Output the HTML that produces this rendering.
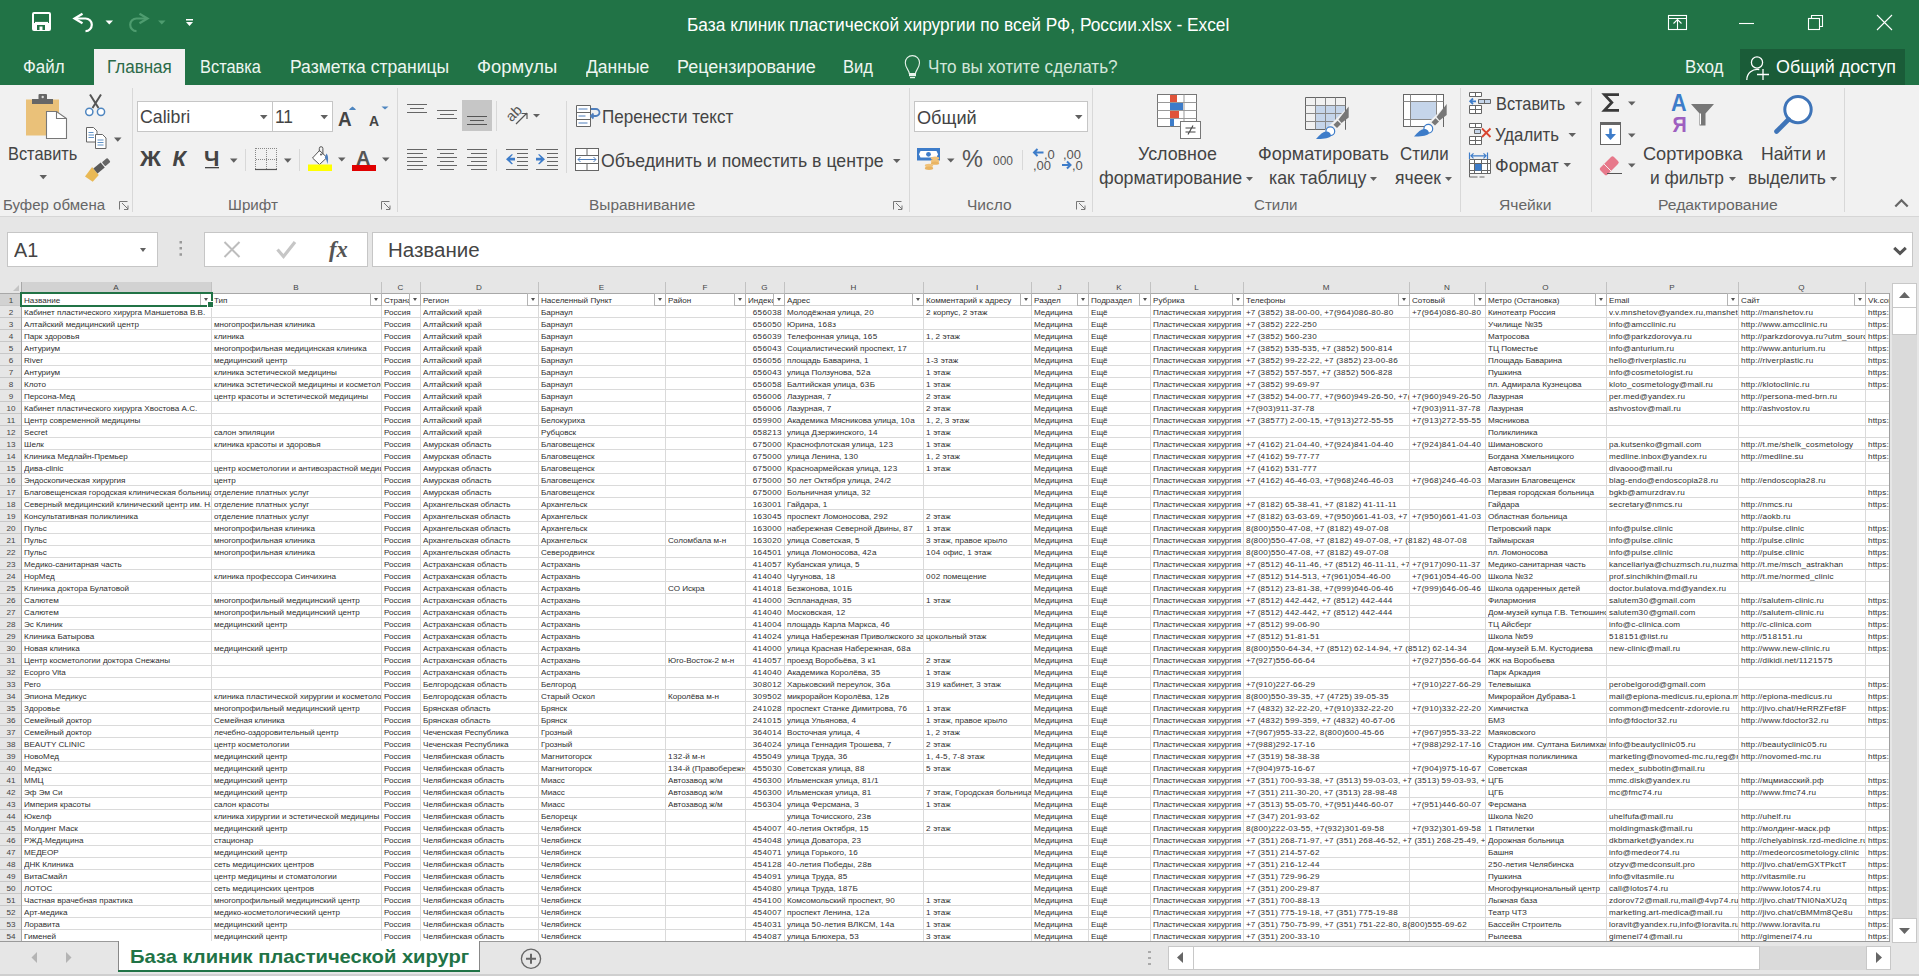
<!DOCTYPE html>
<html><head><meta charset="utf-8"><title>Excel</title><style>
*{box-sizing:border-box}
html,body{margin:0;padding:0}
body{width:1919px;height:976px;overflow:hidden;position:relative;font-family:"Liberation Sans",sans-serif;background:#fff;color:#262626}
.a{position:absolute}
.t{position:absolute;white-space:nowrap;line-height:1;transform-origin:0 0}
.c{position:absolute;white-space:nowrap;overflow:hidden;font-size:8.1px;line-height:12px;height:12px;color:#2e2e2e}
.c b{font-weight:400;letter-spacing:.38px}
.l{letter-spacing:.18px}
.l b{letter-spacing:.5px}
.fb{position:absolute;width:12px;height:13px;background:#fff;border:1px solid #b4b4b4}
.sb{position:absolute;background:#fff;border:1px solid #c8c8c8}
.vl{position:absolute;width:1px;background:#dadada}
.hl{position:absolute;height:1px;background:#dadada}
.dd{position:absolute;width:0;height:0;border-left:3.5px solid transparent;border-right:3.5px solid transparent;border-top:4px solid #606060}
.tab{position:absolute;top:49px;height:36px;line-height:36px;font-size:17px;color:#f0f6f2;white-space:nowrap}
.lbl{position:absolute;top:196px;font-size:15px;color:#595959;white-space:nowrap;line-height:18px}
.rb{position:absolute;font-size:17px;color:#333;white-space:nowrap;line-height:20px}
</style></head><body>

<div class="a" style="left:0;top:0;width:1919px;height:85px;background:#217346"></div>
<div class="a" style="left:94px;top:49px;width:91px;height:37px;background:#f1f1f1"></div>
<div class="a" style="left:1740px;top:49px;width:165px;height:36px;background:#1a5c38"></div>
<div class="a" style="left:0;top:85px;width:1919px;height:132px;background:#f1f1f1;border-bottom:1px solid #d6d6d6"></div>
<div class="a" style="left:132px;top:88px;width:1px;height:124px;background:#d8d8d8"></div>
<div class="a" style="left:397px;top:88px;width:1px;height:124px;background:#d8d8d8"></div>
<div class="a" style="left:496px;top:101px;width:1px;height:30px;background:#d8d8d8"></div>
<div class="a" style="left:496px;top:149px;width:1px;height:22px;background:#d8d8d8"></div>
<div class="a" style="left:566px;top:101px;width:1px;height:72px;background:#d8d8d8"></div>
<div class="a" style="left:909px;top:88px;width:1px;height:124px;background:#d8d8d8"></div>
<div class="a" style="left:1092px;top:88px;width:1px;height:124px;background:#d8d8d8"></div>
<div class="a" style="left:1460px;top:88px;width:1px;height:124px;background:#d8d8d8"></div>
<div class="a" style="left:1591px;top:88px;width:1px;height:124px;background:#d8d8d8"></div>
<div class="a" style="left:1844px;top:88px;width:1px;height:124px;background:#d8d8d8"></div>
<div class="a" style="left:0;top:217px;width:1919px;height:65px;background:#e6e6e6"></div>
<div class="a" style="left:7px;top:232px;width:151px;height:35px;background:#fff;border:1px solid #c6c6c6"></div>
<div class="dd" style="left:140px;top:248px"></div>
<div class="a" style="left:204px;top:232px;width:164px;height:35px;background:#fff;border:1px solid #c6c6c6"></div>
<div class="a" style="left:372px;top:232px;width:1541px;height:35px;background:#fff;border:1px solid #c6c6c6"></div>
<svg class="a" style="left:0;top:0" width="1919" height="282"><rect x="33" y="13" width="17" height="17" rx="1" fill="none" stroke="#fff" stroke-width="2"/><rect x="33" y="23" width="17" height="7" fill="#fff"/><path d="M37 25h8v5h-2.5v-3.5h-3v3.5H37z" fill="#217346"/><path d="M35 22.5h13" stroke="#fff" stroke-width="1.2"/><path d="M82.5 13.8L74.5 18.5l8 4.8" fill="none" stroke="#fff" stroke-width="2.2" stroke-linejoin="miter"/><path d="M75 18.5h10.5a6.3 6.3 0 0 1 0 12.6" fill="none" stroke="#fff" stroke-width="2.2"/><path d="M105.5 20.5h7.5l-3.75 4z" fill="#fff"/><path d="M139.5 13.8l8 4.7l-8 4.8" fill="none" stroke="#4e9c6f" stroke-width="2.2"/><path d="M147 18.5h-10.5a6.3 6.3 0 0 0 0 12.6" fill="none" stroke="#4e9c6f" stroke-width="2.2"/><path d="M158 20.5h7.5l-3.75 4z" fill="#4e9c6f"/><rect x="186" y="19" width="7" height="1.5" fill="#fff"/><path d="M186 22h7l-3.5 4z" fill="#fff"/><rect x="1668.5" y="15.5" width="18" height="14" fill="none" stroke="#fff" stroke-width="1.1"/><path d="M1668.5 18.5h18M1677.5 20v9.5M1673.5 23.5l4-4l4 4" fill="none" stroke="#fff" stroke-width="1.1"/><path d="M1739 23.5h15" stroke="#fff" stroke-width="1.1"/><rect x="1808.5" y="18.5" width="11" height="11" fill="none" stroke="#fff" stroke-width="1.1"/><path d="M1811.5 18.5v-3h11v11h-3" fill="none" stroke="#fff" stroke-width="1.1"/><path d="M1877 15l15 15M1892 15l-15 15" stroke="#fff" stroke-width="1.1"/><path d="M909.3 73.5c0-3-4-5.5-4-10.8a7.1 7.1 0 0 1 14.2 0c0 5.3-4 7.8-4 10.8z" fill="none" stroke="#e8f3ec" stroke-width="1.1"/><rect x="909" y="73" width="7" height="3.2" fill="#e8f3ec"/><rect x="910" y="77" width="5" height="1.2" fill="#e8f3ec"/><circle cx="1757" cy="62.5" r="5.6" fill="none" stroke="#fff" stroke-width="1.3"/><path d="M1746.8 80a10.5 10.5 0 0 1 12.5 -10.5" fill="none" stroke="#fff" stroke-width="1.3"/><path d="M1757 74.5h12M1763 69v11" stroke="#fff" stroke-width="1.3"/><rect x="26" y="99.5" width="33" height="36" fill="#eac179"/><rect x="32" y="99" width="21" height="5" fill="#666"/><rect x="38.5" y="94" width="8.5" height="6" rx="1" fill="#666"/><circle cx="42.7" cy="97" r="1.2" fill="#ddd"/><path d="M46.5 111.5h10l10 7v20h-20z" fill="#fff" stroke="#777" stroke-width="1.1"/><path d="M56.5 111.5v7h10" fill="none" stroke="#777" stroke-width="1.1"/><path d="M39.5 175h7.5l-3.75 4.2z" fill="#606060"/><path d="M90 94.5l8.5 13.5M101 94.5l-8.5 13.5" stroke="#555" stroke-width="2"/><circle cx="89.3" cy="111.8" r="3.6" fill="#fff" stroke="#4f86c0" stroke-width="1.5"/><circle cx="101" cy="111.8" r="3.6" fill="#fff" stroke="#4f86c0" stroke-width="1.5"/><path d="M86.5 127.5h7l3.5 3.5v11h-10.5z" fill="#fff" stroke="#666" stroke-width="1"/><path d="M88.5 132.5h5M88.5 135h5.5M88.5 137.5h5.5" stroke="#4f86c0" stroke-width="0.9"/><path d="M95.5 134.5h7l3.5 3.5v10.5h-10.5z" fill="#fff" stroke="#666" stroke-width="1"/><path d="M97.5 140h6M97.5 142.5h6M97.5 145h6" stroke="#4f86c0" stroke-width="0.9"/><path d="M114 137.5h7.5l-3.75 4.2z" fill="#606060"/><g transform="translate(98.5 168.5) rotate(-40)"><path d="M-4 -5.2L-4 5.2L-13 6.5L-15.5 -2.5z" fill="#e9b955"/><rect x="-4" y="-3.2" width="9.5" height="6.4" fill="#5a5a5a"/><rect x="6.5" y="-2.6" width="7" height="5.2" rx="1" fill="#666"/></g><rect x="137.5" y="101.5" width="195" height="30" fill="#fff" stroke="#c6c6c6"/><path d="M272.5 102v29" stroke="#c6c6c6"/><path d="M260 115h7.5l-3.75 4.2z" fill="#606060"/><path d="M320.5 115h7.5l-3.75 4.2z" fill="#606060"/><path d="M352.5 110l3.5-3h-7z" fill="#4f86c0" transform="rotate(180 352.5 108.5)"/><path d="M349 109.5l3.5-3l3.5 3z" fill="#4f86c0"/><path d="M381.5 106.5h7l-3.5 3z" fill="#4f86c0"/><rect x="205" y="167" width="14" height="1.3" fill="#444"/><path d="M230 158.5h7.5l-3.75 4.2z" fill="#606060"/><path d="M245.5 149v22M299.5 149v22" stroke="#d8d8d8"/><path d="M255.5 148.5h21M255.5 159.5h21M255.5 148v21M266.5 148v21M276.5 148v21" fill="none" stroke="#888" stroke-width="1" stroke-dasharray="1 1" shape-rendering="crispEdges"/><path d="M255 169.5h22" stroke="#555" stroke-width="1.2"/><path d="M284 158.5h7.5l-3.75 4.2z" fill="#606060"/><path d="M312.5 158l7-7.5l7.5 7l-7.5 7z" fill="#fff" stroke="#555" stroke-width="1"/><path d="M319.3 151.5v-3a1.8 1.8 0 0 1 3.6 0v6" fill="none" stroke="#555" stroke-width="1"/><circle cx="321" cy="154.5" r="1" fill="#555"/><path d="M326.5 153.5c2 2 2 7 0.8 10.5c-0.5-3-1-5-2.5-6.5z" fill="#4f7fbd"/><rect x="308" y="164.5" width="24" height="6.5" fill="#ffff00"/><path d="M338 157.5h7.5l-3.75 4z" fill="#606060"/><rect x="352" y="165" width="24" height="6" fill="#e00000"/><path d="M382 157.5h7.5l-3.75 4z" fill="#606060"/><path d="M119.5 209.5v-8h8" fill="none" stroke="#777" stroke-width="1"/><path d="M122 203l6 6M128 205.5v4h-4" fill="none" stroke="#777" stroke-width="1"/><path d="M381.5 209.5v-8h8" fill="none" stroke="#777" stroke-width="1"/><path d="M384 203l6 6M390 205.5v4h-4" fill="none" stroke="#777" stroke-width="1"/><path d="M893.5 209.5v-8h8" fill="none" stroke="#777" stroke-width="1"/><path d="M896 203l6 6M902 205.5v4h-4" fill="none" stroke="#777" stroke-width="1"/><path d="M1076.5 209.5v-8h8" fill="none" stroke="#777" stroke-width="1"/><path d="M1079 203l6 6M1085 205.5v4h-4" fill="none" stroke="#777" stroke-width="1"/><path d="M407.0 104.5h20 M410.0 108.5h14 M407.0 112.5h20" stroke="#666" stroke-width="1"/><path d="M437.0 110.5h20 M440.0 114.5h14 M437.0 118.5h20" stroke="#666" stroke-width="1"/><rect x="462" y="100" width="30" height="31" fill="#c6c6c6"/><path d="M467.0 116.5h20 M470.0 120.5h14 M467.0 124.5h20" stroke="#555" stroke-width="1"/><path d="M407 149.5h20 M407 153.5h16 M407 157.5h20 M407 161.5h16 M407 165.5h20 M407 169.5h16" stroke="#666" stroke-width="1"/><path d="M437.0 149.5h20 M440.0 153.5h14 M437.0 157.5h20 M440.0 161.5h14 M437.0 165.5h20 M440.0 169.5h14" stroke="#666" stroke-width="1"/><path d="M467 149.5h20 M471 153.5h16 M467 157.5h20 M471 161.5h16 M467 165.5h20 M471 169.5h16" stroke="#666" stroke-width="1"/><text x="0" y="0" font-family="Liberation Sans" font-size="14.5" fill="#555" transform="translate(511.5 122.5) rotate(-45)">ab</text><path d="M516 124l11-11M521.5 113.5h5.5v5.5" fill="none" stroke="#555" stroke-width="1.2"/><path d="M533 114h7l-3.5 3.5z" fill="#606060"/><path d="M506 149.5h22M517 153.5h11M517 157.5h11M517 161.5h11M517 165.5h11M506 169.5h22" stroke="#666" stroke-width="1"/><path d="M515 157.8h-5l3-3.3l-1.5-0.3l-5.5 5l5.5 5l1.5-0.3l-3-3.3h5z" fill="#3d7cc9"/><path d="M536 149.5h22M547 153.5h11M547 157.5h11M547 161.5h11M547 165.5h11M536 169.5h22" stroke="#666" stroke-width="1"/><path d="M536 157.8h5l-3-3.3l1.5-0.3l5.5 5l-5.5 5l-1.5-0.3l3-3.3h-5z" fill="#3d7cc9"/><path d="M576.5 105.5h14v21h-14z" fill="#fff" stroke="#666"/><path d="M576.5 112.5h14M576.5 119.5h14" stroke="#666"/><path d="M578.5 109h9M578.5 116h7M578.5 123h9" stroke="#4f7fbd"/><path d="M591 109h5a3.5 3.5 0 0 1 0 7h-5M593.5 113.5l-2.5 2.5l2.5 2.5" fill="none" stroke="#4f7fbd" stroke-width="1.8"/><rect x="575.5" y="148.5" width="23" height="22" fill="#fff" stroke="#666"/><path d="M575.5 155.5h23M575.5 163.5h23M587 148.5v7M587 163.5v7" stroke="#666"/><path d="M578 159.5h18M580.5 157l-2.5 2.5l2.5 2.5M593.5 157l2.5 2.5l-2.5 2.5" fill="none" stroke="#4f7fbd" stroke-width="1"/><path d="M893 159h7.5l-3.75 4z" fill="#606060"/><rect x="914.5" y="101.5" width="173" height="30" fill="#fff" stroke="#c6c6c6"/><path d="M1075 115h7.5l-3.75 4.2z" fill="#606060"/><rect x="917" y="148" width="23" height="12.5" fill="#3d7cc9"/><path d="M920.5 151h16l1.5 3.2l-1.5 3.2h-16l-1.5-3.2z" fill="#fff"/><circle cx="928.5" cy="154.3" r="2.4" fill="#3d7cc9"/><ellipse cx="935" cy="158.3" rx="4.2" ry="1.8" fill="#f0c27a"/><ellipse cx="935" cy="161" rx="4.2" ry="1.8" fill="#f0c27a"/><ellipse cx="935" cy="163.2" rx="4.2" ry="1.6" fill="#e9b462"/><ellipse cx="929" cy="165.5" rx="4.2" ry="1.8" fill="#f0c27a"/><ellipse cx="929" cy="168.3" rx="4.2" ry="1.7" fill="#e9b462"/><path d="M947 158.5h7.5l-3.75 4z" fill="#606060"/><path d="M1022.5 150v20" stroke="#d8d8d8"/><path d="M1033.5 152.5h10M1037.5 149l-3.5 3.5l3.5 3.5" fill="none" stroke="#3d7cc9" stroke-width="2"/><path d="M1062 165h8M1067 161.5l3.5 3.5l-3.5 3.5" fill="none" stroke="#3d7cc9" stroke-width="2"/><rect x="1157.5" y="94.5" width="39" height="32" fill="#fff" stroke="#777"/><path d="M1157.5 102.5h39M1157.5 110.5h39M1157.5 118.5h39M1170.5 94.5v32M1184 94.5v32" stroke="#999"/><rect x="1170" y="95" width="7" height="7" fill="#e0543a"/><rect x="1170" y="103" width="13" height="7" fill="#3d7cc9"/><rect x="1170" y="111" width="9" height="7" fill="#e0543a"/><rect x="1170" y="119" width="4" height="7" fill="#3d7cc9"/><rect x="1180.5" y="121.5" width="20" height="17" fill="#fff" stroke="#777"/><path d="M1185.5 128h10M1185.5 132h10M1193 125.5l-5 9" stroke="#444" stroke-width="1.1"/><rect x="1315.5" y="105.5" width="30" height="24" fill="#c5d5ea"/><path d="M1305.5 97.5h40v32h-40z" fill="none" stroke="#666"/><path d="M1305.5 105.5h40M1305.5 113.5h40M1305.5 121.5h40M1315.5 97.5v32M1325.5 97.5v32M1335.5 97.5v32" stroke="#888"/><path d="M1345 110L1324 131L1345 131z" fill="#f1f1f1"/><g transform="translate(0 0)"><path d="M1338.5 119.5L1348.7 106.5V117.5L1341.5 123z" fill="#777"/><path d="M1333.5 124.8L1337.5 120.8L1341 124L1337 128z" fill="#777"/><circle cx="1330.3" cy="131.3" r="4.4" fill="#fff" stroke="#3d7cc9" stroke-width="1.2"/><path d="M1316 139C1320 134 1324 131 1327 131.5C1330 132 1331.5 134.5 1330.5 136.5C1328 138.5 1322 139 1316 139z" fill="#3d7cc9"/></g><rect x="1403.5" y="94.5" width="40" height="32" fill="#fff" stroke="#666"/><rect x="1410" y="101" width="26.5" height="18.5" fill="#c5d5ea"/><path d="M1403.5 101.5h40M1403.5 119.5h40M1410.5 94.5v32M1436.5 94.5v32" stroke="#888"/><path d="M1443 108L1422 129L1443 129z" fill="#f1f1f1"/><g transform="translate(98 -2.5)"><path d="M1338.5 119.5L1348.7 106.5V117.5L1341.5 123z" fill="#777"/><path d="M1333.5 124.8L1337.5 120.8L1341 124L1337 128z" fill="#777"/><circle cx="1330.3" cy="131.3" r="4.4" fill="#fff" stroke="#3d7cc9" stroke-width="1.2"/><path d="M1316 139C1320 134 1324 131 1327 131.5C1330 132 1331.5 134.5 1330.5 136.5C1328 138.5 1322 139 1316 139z" fill="#3d7cc9"/></g><path d="M1469.5 92.5h12v4h-12zM1475.5 92.5v4M1469.5 105.5h12v8h-12zM1469.5 109.5h12M1475.5 105.5v8" fill="#fff" stroke="#666"/><path d="M1478.5 99.5h12v4h-12zM1484.5 99.5v4" fill="#c5d5ea" stroke="#666"/><path d="M1476 101.3h-5M1473 98.5l-2.8 2.8l2.8 2.8" fill="none" stroke="#3d7cc9" stroke-width="1.8"/><path d="M1574.5 101.8h7.5l-3.75 4z" fill="#606060"/><path d="M1469.5 123.5h12v4h-12zM1475.5 123.5v4M1469.5 136.5h12v8h-12zM1469.5 140.5h12M1475.5 136.5v8" fill="#fff" stroke="#666"/><path d="M1474.5 129.5h6v4h-6z" fill="#c5d5ea" stroke="#666"/><path d="M1482 128.5l8.5 8.5M1490.5 128.5l-8.5 8.5" stroke="#d9442e" stroke-width="1.8"/><path d="M1568.5 133h7.5l-3.75 4z" fill="#606060"/><path d="M1469.5 159.5h21v14h-21zM1469.5 163.5h21M1469.5 170.5h21M1474.5 159.5v14M1481.5 159.5v14M1487.5 159.5v14" fill="#fff" stroke="#666"/><rect x="1475" y="164" width="6.5" height="6.5" fill="#3d7cc9"/><path d="M1469.5 173.5v3.5h8M1479.5 177h5" fill="none" stroke="#666"/><path d="M1471 155.8h15M1473.5 153.3l-2.5 2.5l2.5 2.5M1483.5 153.3l2.5 2.5l-2.5 2.5M1469.5 152.5v6.5M1487.5 152.5v6.5" fill="none" stroke="#3d7cc9" stroke-width="1.2"/><path d="M1563.5 163h7.5l-3.75 4z" fill="#606060"/><path d="M1619 94.6H1604.5L1611.8 102.5L1604.5 110.3H1619" fill="none" stroke="#3a3a3a" stroke-width="2.8" stroke-linejoin="miter"/><path d="M1628 101.5h7.5l-3.75 4z" fill="#606060"/><rect x="1600.5" y="122.5" width="20" height="22" fill="#fff" stroke="#666"/><rect x="1600" y="122" width="21" height="3" fill="#666"/><path d="M1610.5 128.5v7" stroke="#3d7cc9" stroke-width="2.6"/><path d="M1605 134h11l-5.5 6z" fill="#3d7cc9"/><path d="M1628 133.5h7.5l-3.75 4z" fill="#606060"/><path d="M1600.5 167.5l10.5-10.5a2 2 0 0 1 3 0l4 4a2 2 0 0 1 0 3l-10.5 10.5a2 2 0 0 1-3 0l-4-4a2 2 0 0 1 0-3z" fill="#e7798b"/><path d="M1604 164l7 7" stroke="#f1f1f1" stroke-width="1"/><path d="M1607 173.5h15" stroke="#555" stroke-width="1"/><path d="M1628 163.5h7.5l-3.75 4z" fill="#606060"/><text x="1671" y="111.5" font-family="Liberation Sans" font-size="24" font-weight="700" fill="#3d7cc9" transform="translate(167.1 0) scale(.9 1)">A</text><text x="1672.5" y="132.5" font-family="Liberation Sans" font-size="22" font-weight="700" fill="#9e5fc0" transform="translate(167.2 0) scale(.9 1)">Я</text><path d="M1691 104h23l-8.5 9.5v12h-6v-12z" fill="#777"/><path d="M1700.5 113.5v11" stroke="#fff" stroke-width="1"/><circle cx="1798" cy="109.6" r="13.2" fill="#fff" stroke="#3e74b8" stroke-width="3"/><path d="M1788.5 119.5l-12 12" stroke="#3e74b8" stroke-width="4.6" stroke-linecap="round"/><path d="M1895.3 206.5l6.2-6.3l6.2 6.3" fill="none" stroke="#666" stroke-width="2.2"/><path d="M1246 177h7l-3.5 4z" fill="#606060"/><path d="M1370 177h7l-3.5 4z" fill="#606060"/><path d="M1445 177h7l-3.5 4z" fill="#606060"/><path d="M1729 177h7l-3.5 4z" fill="#606060"/><path d="M1830 177h7l-3.5 4z" fill="#606060"/><path d="M179.5 241h2.5v2.5h-2.5zM179.5 247h2.5v2.5h-2.5zM179.5 253.2h2.5v2.5h-2.5z" fill="#999"/><path d="M224.5 242l15 15M239.5 242l-15 15" stroke="#bdbdbd" stroke-width="2"/><path d="M277.5 249.5l6 7l11.5-14.5" fill="none" stroke="#c6c6c6" stroke-width="3.2"/><path d="M1894.2 247.8l5.8 5.6l5.8-5.6" fill="none" stroke="#555" stroke-width="3"/></svg>
<div class="t" style="left:337.5px;top:107.5px;font-size:21px;color:#444;font-weight:700;transform:scaleX(.9)">A</div><div class="t" style="left:368.5px;top:113px;font-size:15.5px;color:#444;font-weight:700;transform:scaleX(.9)">A</div><div class="t" style="left:139.5px;top:148px;font-size:22px;color:#444;font-weight:700;transform:scaleX(1.05)">Ж</div><div class="t" style="left:172.5px;top:148px;font-size:22px;color:#444;font-weight:700;font-style:italic">К</div><div class="t" style="left:204px;top:148px;font-size:22px;color:#444;font-weight:700">Ч</div><div class="t" style="left:356px;top:146.5px;font-size:21px;color:#555;font-weight:700;transform:scaleX(.95)">A</div><div class="t" style="left:962px;top:147.5px;font-size:23.5px;color:#555;">%</div><div class="t" style="left:993px;top:153.5px;font-size:13px;color:#555;transform:scaleX(.92)">000</div><div class="t" style="left:1044px;top:147.5px;font-size:13px;color:#555;">,0</div><div class="t" style="left:1033px;top:158.5px;font-size:13px;color:#555;">,00</div><div class="t" style="left:1063px;top:147.5px;font-size:13px;color:#555;">,00</div><div class="t" style="left:1072px;top:158.5px;font-size:13px;color:#555;">,0</div><div class="t" style="left:329px;top:238.5px;font-size:22.5px;color:#555;font-weight:700"><i style='font-family:Liberation Serif'>fx</i></div>
<div class="a" style="left:0;top:282px;width:1890px;height:11px;background:#e6e6e6"></div>
<div class="a" style="left:0;top:293px;width:21px;height:648px;background:#e6e6e6"></div>
<div class="a" style="left:21px;top:282px;width:190px;height:11px;background:#d2d2d2"></div>
<div class="a" style="left:0;top:294px;width:21px;height:11px;background:#d2d2d2"></div>
<svg class="a" style="left:0;top:282px" width="21" height="11"><path d="M19 3v6h-6z" fill="#c4c4c4"/></svg>
<div class="vl" style="left:211px;top:282px;height:11px;background:#c2c2c2"></div>
<div class="vl" style="left:211px;top:294px;height:647px"></div>
<div class="vl" style="left:381px;top:282px;height:11px;background:#c2c2c2"></div>
<div class="vl" style="left:381px;top:294px;height:647px"></div>
<div class="vl" style="left:420px;top:282px;height:11px;background:#c2c2c2"></div>
<div class="vl" style="left:420px;top:294px;height:647px"></div>
<div class="vl" style="left:538px;top:282px;height:11px;background:#c2c2c2"></div>
<div class="vl" style="left:538px;top:294px;height:647px"></div>
<div class="vl" style="left:665px;top:282px;height:11px;background:#c2c2c2"></div>
<div class="vl" style="left:665px;top:294px;height:647px"></div>
<div class="vl" style="left:745px;top:282px;height:11px;background:#c2c2c2"></div>
<div class="vl" style="left:745px;top:294px;height:647px"></div>
<div class="vl" style="left:784px;top:282px;height:11px;background:#c2c2c2"></div>
<div class="vl" style="left:784px;top:294px;height:647px"></div>
<div class="vl" style="left:923px;top:282px;height:11px;background:#c2c2c2"></div>
<div class="vl" style="left:923px;top:294px;height:647px"></div>
<div class="vl" style="left:1031px;top:282px;height:11px;background:#c2c2c2"></div>
<div class="vl" style="left:1031px;top:294px;height:647px"></div>
<div class="vl" style="left:1088px;top:282px;height:11px;background:#c2c2c2"></div>
<div class="vl" style="left:1088px;top:294px;height:647px"></div>
<div class="vl" style="left:1150px;top:282px;height:11px;background:#c2c2c2"></div>
<div class="vl" style="left:1150px;top:294px;height:647px"></div>
<div class="vl" style="left:1243px;top:282px;height:11px;background:#c2c2c2"></div>
<div class="vl" style="left:1243px;top:294px;height:647px"></div>
<div class="vl" style="left:1409px;top:282px;height:11px;background:#c2c2c2"></div>
<div class="vl" style="left:1409px;top:294px;height:647px"></div>
<div class="vl" style="left:1485px;top:282px;height:11px;background:#c2c2c2"></div>
<div class="vl" style="left:1485px;top:294px;height:647px"></div>
<div class="vl" style="left:1606px;top:282px;height:11px;background:#c2c2c2"></div>
<div class="vl" style="left:1606px;top:294px;height:647px"></div>
<div class="vl" style="left:1738px;top:282px;height:11px;background:#c2c2c2"></div>
<div class="vl" style="left:1738px;top:294px;height:647px"></div>
<div class="vl" style="left:1865px;top:282px;height:11px;background:#c2c2c2"></div>
<div class="vl" style="left:1865px;top:294px;height:647px"></div>
<div class="hl" style="left:22px;top:305px;width:1868px"></div>
<div class="hl" style="left:0;top:305px;width:21px;background:#c8c8c8"></div>
<div class="hl" style="left:22px;top:317px;width:1868px"></div>
<div class="hl" style="left:0;top:317px;width:21px;background:#c8c8c8"></div>
<div class="hl" style="left:22px;top:329px;width:1868px"></div>
<div class="hl" style="left:0;top:329px;width:21px;background:#c8c8c8"></div>
<div class="hl" style="left:22px;top:341px;width:1868px"></div>
<div class="hl" style="left:0;top:341px;width:21px;background:#c8c8c8"></div>
<div class="hl" style="left:22px;top:353px;width:1868px"></div>
<div class="hl" style="left:0;top:353px;width:21px;background:#c8c8c8"></div>
<div class="hl" style="left:22px;top:365px;width:1868px"></div>
<div class="hl" style="left:0;top:365px;width:21px;background:#c8c8c8"></div>
<div class="hl" style="left:22px;top:377px;width:1868px"></div>
<div class="hl" style="left:0;top:377px;width:21px;background:#c8c8c8"></div>
<div class="hl" style="left:22px;top:389px;width:1868px"></div>
<div class="hl" style="left:0;top:389px;width:21px;background:#c8c8c8"></div>
<div class="hl" style="left:22px;top:401px;width:1868px"></div>
<div class="hl" style="left:0;top:401px;width:21px;background:#c8c8c8"></div>
<div class="hl" style="left:22px;top:413px;width:1868px"></div>
<div class="hl" style="left:0;top:413px;width:21px;background:#c8c8c8"></div>
<div class="hl" style="left:22px;top:425px;width:1868px"></div>
<div class="hl" style="left:0;top:425px;width:21px;background:#c8c8c8"></div>
<div class="hl" style="left:22px;top:437px;width:1868px"></div>
<div class="hl" style="left:0;top:437px;width:21px;background:#c8c8c8"></div>
<div class="hl" style="left:22px;top:449px;width:1868px"></div>
<div class="hl" style="left:0;top:449px;width:21px;background:#c8c8c8"></div>
<div class="hl" style="left:22px;top:461px;width:1868px"></div>
<div class="hl" style="left:0;top:461px;width:21px;background:#c8c8c8"></div>
<div class="hl" style="left:22px;top:473px;width:1868px"></div>
<div class="hl" style="left:0;top:473px;width:21px;background:#c8c8c8"></div>
<div class="hl" style="left:22px;top:485px;width:1868px"></div>
<div class="hl" style="left:0;top:485px;width:21px;background:#c8c8c8"></div>
<div class="hl" style="left:22px;top:497px;width:1868px"></div>
<div class="hl" style="left:0;top:497px;width:21px;background:#c8c8c8"></div>
<div class="hl" style="left:22px;top:509px;width:1868px"></div>
<div class="hl" style="left:0;top:509px;width:21px;background:#c8c8c8"></div>
<div class="hl" style="left:22px;top:521px;width:1868px"></div>
<div class="hl" style="left:0;top:521px;width:21px;background:#c8c8c8"></div>
<div class="hl" style="left:22px;top:533px;width:1868px"></div>
<div class="hl" style="left:0;top:533px;width:21px;background:#c8c8c8"></div>
<div class="hl" style="left:22px;top:545px;width:1868px"></div>
<div class="hl" style="left:0;top:545px;width:21px;background:#c8c8c8"></div>
<div class="hl" style="left:22px;top:557px;width:1868px"></div>
<div class="hl" style="left:0;top:557px;width:21px;background:#c8c8c8"></div>
<div class="hl" style="left:22px;top:569px;width:1868px"></div>
<div class="hl" style="left:0;top:569px;width:21px;background:#c8c8c8"></div>
<div class="hl" style="left:22px;top:581px;width:1868px"></div>
<div class="hl" style="left:0;top:581px;width:21px;background:#c8c8c8"></div>
<div class="hl" style="left:22px;top:593px;width:1868px"></div>
<div class="hl" style="left:0;top:593px;width:21px;background:#c8c8c8"></div>
<div class="hl" style="left:22px;top:605px;width:1868px"></div>
<div class="hl" style="left:0;top:605px;width:21px;background:#c8c8c8"></div>
<div class="hl" style="left:22px;top:617px;width:1868px"></div>
<div class="hl" style="left:0;top:617px;width:21px;background:#c8c8c8"></div>
<div class="hl" style="left:22px;top:629px;width:1868px"></div>
<div class="hl" style="left:0;top:629px;width:21px;background:#c8c8c8"></div>
<div class="hl" style="left:22px;top:641px;width:1868px"></div>
<div class="hl" style="left:0;top:641px;width:21px;background:#c8c8c8"></div>
<div class="hl" style="left:22px;top:653px;width:1868px"></div>
<div class="hl" style="left:0;top:653px;width:21px;background:#c8c8c8"></div>
<div class="hl" style="left:22px;top:665px;width:1868px"></div>
<div class="hl" style="left:0;top:665px;width:21px;background:#c8c8c8"></div>
<div class="hl" style="left:22px;top:677px;width:1868px"></div>
<div class="hl" style="left:0;top:677px;width:21px;background:#c8c8c8"></div>
<div class="hl" style="left:22px;top:689px;width:1868px"></div>
<div class="hl" style="left:0;top:689px;width:21px;background:#c8c8c8"></div>
<div class="hl" style="left:22px;top:701px;width:1868px"></div>
<div class="hl" style="left:0;top:701px;width:21px;background:#c8c8c8"></div>
<div class="hl" style="left:22px;top:713px;width:1868px"></div>
<div class="hl" style="left:0;top:713px;width:21px;background:#c8c8c8"></div>
<div class="hl" style="left:22px;top:725px;width:1868px"></div>
<div class="hl" style="left:0;top:725px;width:21px;background:#c8c8c8"></div>
<div class="hl" style="left:22px;top:737px;width:1868px"></div>
<div class="hl" style="left:0;top:737px;width:21px;background:#c8c8c8"></div>
<div class="hl" style="left:22px;top:749px;width:1868px"></div>
<div class="hl" style="left:0;top:749px;width:21px;background:#c8c8c8"></div>
<div class="hl" style="left:22px;top:761px;width:1868px"></div>
<div class="hl" style="left:0;top:761px;width:21px;background:#c8c8c8"></div>
<div class="hl" style="left:22px;top:773px;width:1868px"></div>
<div class="hl" style="left:0;top:773px;width:21px;background:#c8c8c8"></div>
<div class="hl" style="left:22px;top:785px;width:1868px"></div>
<div class="hl" style="left:0;top:785px;width:21px;background:#c8c8c8"></div>
<div class="hl" style="left:22px;top:797px;width:1868px"></div>
<div class="hl" style="left:0;top:797px;width:21px;background:#c8c8c8"></div>
<div class="hl" style="left:22px;top:809px;width:1868px"></div>
<div class="hl" style="left:0;top:809px;width:21px;background:#c8c8c8"></div>
<div class="hl" style="left:22px;top:821px;width:1868px"></div>
<div class="hl" style="left:0;top:821px;width:21px;background:#c8c8c8"></div>
<div class="hl" style="left:22px;top:833px;width:1868px"></div>
<div class="hl" style="left:0;top:833px;width:21px;background:#c8c8c8"></div>
<div class="hl" style="left:22px;top:845px;width:1868px"></div>
<div class="hl" style="left:0;top:845px;width:21px;background:#c8c8c8"></div>
<div class="hl" style="left:22px;top:857px;width:1868px"></div>
<div class="hl" style="left:0;top:857px;width:21px;background:#c8c8c8"></div>
<div class="hl" style="left:22px;top:869px;width:1868px"></div>
<div class="hl" style="left:0;top:869px;width:21px;background:#c8c8c8"></div>
<div class="hl" style="left:22px;top:881px;width:1868px"></div>
<div class="hl" style="left:0;top:881px;width:21px;background:#c8c8c8"></div>
<div class="hl" style="left:22px;top:893px;width:1868px"></div>
<div class="hl" style="left:0;top:893px;width:21px;background:#c8c8c8"></div>
<div class="hl" style="left:22px;top:905px;width:1868px"></div>
<div class="hl" style="left:0;top:905px;width:21px;background:#c8c8c8"></div>
<div class="hl" style="left:22px;top:917px;width:1868px"></div>
<div class="hl" style="left:0;top:917px;width:21px;background:#c8c8c8"></div>
<div class="hl" style="left:22px;top:929px;width:1868px"></div>
<div class="hl" style="left:0;top:929px;width:21px;background:#c8c8c8"></div>
<div class="hl" style="left:22px;top:941px;width:1868px"></div>
<div class="hl" style="left:0;top:941px;width:21px;background:#c8c8c8"></div>
<div class="hl" style="left:0;top:293px;width:1890px;background:#a8a8a8"></div>
<div class="vl" style="left:21px;top:282px;height:659px;background:#a8a8a8"></div>
<div class="t" style="left:21px;width:190px;text-align:center;top:284px;font-size:8.1px;color:#444">A</div>
<div class="t" style="left:211px;width:170px;text-align:center;top:284px;font-size:8.1px;color:#444">B</div>
<div class="t" style="left:381px;width:39px;text-align:center;top:284px;font-size:8.1px;color:#444">C</div>
<div class="t" style="left:420px;width:118px;text-align:center;top:284px;font-size:8.1px;color:#444">D</div>
<div class="t" style="left:538px;width:127px;text-align:center;top:284px;font-size:8.1px;color:#444">E</div>
<div class="t" style="left:665px;width:80px;text-align:center;top:284px;font-size:8.1px;color:#444">F</div>
<div class="t" style="left:745px;width:39px;text-align:center;top:284px;font-size:8.1px;color:#444">G</div>
<div class="t" style="left:784px;width:139px;text-align:center;top:284px;font-size:8.1px;color:#444">H</div>
<div class="t" style="left:923px;width:108px;text-align:center;top:284px;font-size:8.1px;color:#444">I</div>
<div class="t" style="left:1031px;width:57px;text-align:center;top:284px;font-size:8.1px;color:#444">J</div>
<div class="t" style="left:1088px;width:62px;text-align:center;top:284px;font-size:8.1px;color:#444">K</div>
<div class="t" style="left:1150px;width:93px;text-align:center;top:284px;font-size:8.1px;color:#444">L</div>
<div class="t" style="left:1243px;width:166px;text-align:center;top:284px;font-size:8.1px;color:#444">M</div>
<div class="t" style="left:1409px;width:76px;text-align:center;top:284px;font-size:8.1px;color:#444">N</div>
<div class="t" style="left:1485px;width:121px;text-align:center;top:284px;font-size:8.1px;color:#444">O</div>
<div class="t" style="left:1606px;width:132px;text-align:center;top:284px;font-size:8.1px;color:#444">P</div>
<div class="t" style="left:1738px;width:127px;text-align:center;top:284px;font-size:8.1px;color:#444">Q</div>
<div class="t" style="left:0;width:22px;text-align:center;top:297px;font-size:8.1px;color:#444">1</div>
<div class="t" style="left:0;width:22px;text-align:center;top:309px;font-size:8.1px;color:#444">2</div>
<div class="t" style="left:0;width:22px;text-align:center;top:321px;font-size:8.1px;color:#444">3</div>
<div class="t" style="left:0;width:22px;text-align:center;top:333px;font-size:8.1px;color:#444">4</div>
<div class="t" style="left:0;width:22px;text-align:center;top:345px;font-size:8.1px;color:#444">5</div>
<div class="t" style="left:0;width:22px;text-align:center;top:357px;font-size:8.1px;color:#444">6</div>
<div class="t" style="left:0;width:22px;text-align:center;top:369px;font-size:8.1px;color:#444">7</div>
<div class="t" style="left:0;width:22px;text-align:center;top:381px;font-size:8.1px;color:#444">8</div>
<div class="t" style="left:0;width:22px;text-align:center;top:393px;font-size:8.1px;color:#444">9</div>
<div class="t" style="left:0;width:22px;text-align:center;top:405px;font-size:8.1px;color:#444">10</div>
<div class="t" style="left:0;width:22px;text-align:center;top:417px;font-size:8.1px;color:#444">11</div>
<div class="t" style="left:0;width:22px;text-align:center;top:429px;font-size:8.1px;color:#444">12</div>
<div class="t" style="left:0;width:22px;text-align:center;top:441px;font-size:8.1px;color:#444">13</div>
<div class="t" style="left:0;width:22px;text-align:center;top:453px;font-size:8.1px;color:#444">14</div>
<div class="t" style="left:0;width:22px;text-align:center;top:465px;font-size:8.1px;color:#444">15</div>
<div class="t" style="left:0;width:22px;text-align:center;top:477px;font-size:8.1px;color:#444">16</div>
<div class="t" style="left:0;width:22px;text-align:center;top:489px;font-size:8.1px;color:#444">17</div>
<div class="t" style="left:0;width:22px;text-align:center;top:501px;font-size:8.1px;color:#444">18</div>
<div class="t" style="left:0;width:22px;text-align:center;top:513px;font-size:8.1px;color:#444">19</div>
<div class="t" style="left:0;width:22px;text-align:center;top:525px;font-size:8.1px;color:#444">20</div>
<div class="t" style="left:0;width:22px;text-align:center;top:537px;font-size:8.1px;color:#444">21</div>
<div class="t" style="left:0;width:22px;text-align:center;top:549px;font-size:8.1px;color:#444">22</div>
<div class="t" style="left:0;width:22px;text-align:center;top:561px;font-size:8.1px;color:#444">23</div>
<div class="t" style="left:0;width:22px;text-align:center;top:573px;font-size:8.1px;color:#444">24</div>
<div class="t" style="left:0;width:22px;text-align:center;top:585px;font-size:8.1px;color:#444">25</div>
<div class="t" style="left:0;width:22px;text-align:center;top:597px;font-size:8.1px;color:#444">26</div>
<div class="t" style="left:0;width:22px;text-align:center;top:609px;font-size:8.1px;color:#444">27</div>
<div class="t" style="left:0;width:22px;text-align:center;top:621px;font-size:8.1px;color:#444">28</div>
<div class="t" style="left:0;width:22px;text-align:center;top:633px;font-size:8.1px;color:#444">29</div>
<div class="t" style="left:0;width:22px;text-align:center;top:645px;font-size:8.1px;color:#444">30</div>
<div class="t" style="left:0;width:22px;text-align:center;top:657px;font-size:8.1px;color:#444">31</div>
<div class="t" style="left:0;width:22px;text-align:center;top:669px;font-size:8.1px;color:#444">32</div>
<div class="t" style="left:0;width:22px;text-align:center;top:681px;font-size:8.1px;color:#444">33</div>
<div class="t" style="left:0;width:22px;text-align:center;top:693px;font-size:8.1px;color:#444">34</div>
<div class="t" style="left:0;width:22px;text-align:center;top:705px;font-size:8.1px;color:#444">35</div>
<div class="t" style="left:0;width:22px;text-align:center;top:717px;font-size:8.1px;color:#444">36</div>
<div class="t" style="left:0;width:22px;text-align:center;top:729px;font-size:8.1px;color:#444">37</div>
<div class="t" style="left:0;width:22px;text-align:center;top:741px;font-size:8.1px;color:#444">38</div>
<div class="t" style="left:0;width:22px;text-align:center;top:753px;font-size:8.1px;color:#444">39</div>
<div class="t" style="left:0;width:22px;text-align:center;top:765px;font-size:8.1px;color:#444">40</div>
<div class="t" style="left:0;width:22px;text-align:center;top:777px;font-size:8.1px;color:#444">41</div>
<div class="t" style="left:0;width:22px;text-align:center;top:789px;font-size:8.1px;color:#444">42</div>
<div class="t" style="left:0;width:22px;text-align:center;top:801px;font-size:8.1px;color:#444">43</div>
<div class="t" style="left:0;width:22px;text-align:center;top:813px;font-size:8.1px;color:#444">44</div>
<div class="t" style="left:0;width:22px;text-align:center;top:825px;font-size:8.1px;color:#444">45</div>
<div class="t" style="left:0;width:22px;text-align:center;top:837px;font-size:8.1px;color:#444">46</div>
<div class="t" style="left:0;width:22px;text-align:center;top:849px;font-size:8.1px;color:#444">47</div>
<div class="t" style="left:0;width:22px;text-align:center;top:861px;font-size:8.1px;color:#444">48</div>
<div class="t" style="left:0;width:22px;text-align:center;top:873px;font-size:8.1px;color:#444">49</div>
<div class="t" style="left:0;width:22px;text-align:center;top:885px;font-size:8.1px;color:#444">50</div>
<div class="t" style="left:0;width:22px;text-align:center;top:897px;font-size:8.1px;color:#444">51</div>
<div class="t" style="left:0;width:22px;text-align:center;top:909px;font-size:8.1px;color:#444">52</div>
<div class="t" style="left:0;width:22px;text-align:center;top:921px;font-size:8.1px;color:#444">53</div>
<div class="t" style="left:0;width:22px;text-align:center;top:933px;font-size:8.1px;color:#444">54</div>
<div class="c" style="left:24px;top:295px;width:176px">Название</div>
<div class="c" style="left:214px;top:295px;width:156px">Тип</div>
<div class="c" style="left:384px;top:295px;width:25px">Страна</div>
<div class="c" style="left:423px;top:295px;width:104px">Регион</div>
<div class="c" style="left:541px;top:295px;width:113px">Населенный Пункт</div>
<div class="c" style="left:668px;top:295px;width:66px">Район</div>
<div class="c" style="left:748px;top:295px;width:25px">Индекс</div>
<div class="c" style="left:787px;top:295px;width:125px">Адрес</div>
<div class="c" style="left:926px;top:295px;width:94px">Комментарий к адресу</div>
<div class="c" style="left:1034px;top:295px;width:43px">Раздел</div>
<div class="c" style="left:1091px;top:295px;width:48px">Подраздел</div>
<div class="c" style="left:1153px;top:295px;width:79px">Рубрика</div>
<div class="c" style="left:1246px;top:295px;width:152px">Телефоны</div>
<div class="c" style="left:1412px;top:295px;width:62px">Сотовый</div>
<div class="c" style="left:1488px;top:295px;width:107px">Метро (Остановка)</div>
<div class="c" style="left:1609px;top:295px;width:118px">Email</div>
<div class="c" style="left:1741px;top:295px;width:113px">Сайт</div>
<div class="c" style="left:1868px;top:295px;width:22px">Vk.com</div>
<div class="c" style="left:24px;top:307px;width:357px">Кабинет пластического хирурга Маншетова В.В.</div>
<div class="c" style="left:384px;top:307px;width:36px">Россия</div>
<div class="c" style="left:423px;top:307px;width:115px">Алтайский край</div>
<div class="c" style="left:541px;top:307px;width:204px">Барнаул</div>
<div class="c" style="left:746px;top:307px;width:36px;text-align:right"><b>656038</b></div>
<div class="c" style="left:787px;top:307px;width:136px">Молодёжная улица, <b>20</b></div>
<div class="c" style="left:926px;top:307px;width:105px"><b>2</b> корпус, <b>2</b> этаж</div>
<div class="c" style="left:1034px;top:307px;width:54px">Медицина</div>
<div class="c" style="left:1091px;top:307px;width:59px">Ещё</div>
<div class="c" style="left:1153px;top:307px;width:90px">Пластическая хирургия</div>
<div class="c" style="left:1246px;top:307px;width:163px">+<b>7</b> (<b>3852</b>) <b>38</b>-<b>00</b>-<b>00</b>, +<b>7</b>(<b>964</b>)<b>086</b>-<b>80</b>-<b>80</b></div>
<div class="c" style="left:1412px;top:307px;width:73px">+<b>7</b>(<b>964</b>)<b>086</b>-<b>80</b>-<b>80</b></div>
<div class="c" style="left:1488px;top:307px;width:118px">Кинотеатр Россия</div>
<div class="c l" style="left:1609px;top:307px;width:129px">v.v.mnshetov@yandex.ru,manshetov@mail.ru</div>
<div class="c l" style="left:1741px;top:307px;width:124px">http://manshetov.ru</div>
<div class="c l" style="left:1868px;top:307px;width:22px">https://vk.com/club</div>
<div class="c" style="left:24px;top:319px;width:187px">Алтайский медицинский центр</div>
<div class="c" style="left:214px;top:319px;width:167px">многопрофильная клиника</div>
<div class="c" style="left:384px;top:319px;width:36px">Россия</div>
<div class="c" style="left:423px;top:319px;width:115px">Алтайский край</div>
<div class="c" style="left:541px;top:319px;width:204px">Барнаул</div>
<div class="c" style="left:746px;top:319px;width:36px;text-align:right"><b>656050</b></div>
<div class="c" style="left:787px;top:319px;width:244px">Юрина, <b>168</b>з</div>
<div class="c" style="left:1034px;top:319px;width:54px">Медицина</div>
<div class="c" style="left:1091px;top:319px;width:59px">Ещё</div>
<div class="c" style="left:1153px;top:319px;width:90px">Пластическая хирургия</div>
<div class="c" style="left:1246px;top:319px;width:239px">+<b>7</b> (<b>3852</b>) <b>222</b>-<b>250</b></div>
<div class="c" style="left:1488px;top:319px;width:118px">Училище  №<b>35</b></div>
<div class="c l" style="left:1609px;top:319px;width:129px">info@amcclinic.ru</div>
<div class="c l" style="left:1741px;top:319px;width:124px">http://www.amcclinic.ru</div>
<div class="c l" style="left:1868px;top:319px;width:22px">https://vk.com/club</div>
<div class="c" style="left:24px;top:331px;width:187px">Парк здоровья</div>
<div class="c" style="left:214px;top:331px;width:167px">клиника</div>
<div class="c" style="left:384px;top:331px;width:36px">Россия</div>
<div class="c" style="left:423px;top:331px;width:115px">Алтайский край</div>
<div class="c" style="left:541px;top:331px;width:204px">Барнаул</div>
<div class="c" style="left:746px;top:331px;width:36px;text-align:right"><b>656039</b></div>
<div class="c" style="left:787px;top:331px;width:136px">Телефонная улица, <b>165</b></div>
<div class="c" style="left:926px;top:331px;width:105px"><b>1</b>, <b>2</b> этаж</div>
<div class="c" style="left:1034px;top:331px;width:54px">Медицина</div>
<div class="c" style="left:1091px;top:331px;width:59px">Ещё</div>
<div class="c" style="left:1153px;top:331px;width:90px">Пластическая хирургия</div>
<div class="c" style="left:1246px;top:331px;width:239px">+<b>7</b> (<b>3852</b>) <b>560</b>-<b>230</b></div>
<div class="c" style="left:1488px;top:331px;width:118px">Матросова</div>
<div class="c l" style="left:1609px;top:331px;width:129px">info@parkzdorovya.ru</div>
<div class="c l" style="left:1741px;top:331px;width:124px">http://parkzdorovya.ru?utm_source=yandex</div>
<div class="c l" style="left:1868px;top:331px;width:22px">https://vk.com/club</div>
<div class="c" style="left:24px;top:343px;width:187px">Антуриум</div>
<div class="c" style="left:214px;top:343px;width:167px">многопрофильная медицинская клиника</div>
<div class="c" style="left:384px;top:343px;width:36px">Россия</div>
<div class="c" style="left:423px;top:343px;width:115px">Алтайский край</div>
<div class="c" style="left:541px;top:343px;width:204px">Барнаул</div>
<div class="c" style="left:746px;top:343px;width:36px;text-align:right"><b>656043</b></div>
<div class="c" style="left:787px;top:343px;width:244px">Социалистический проспект, <b>17</b></div>
<div class="c" style="left:1034px;top:343px;width:54px">Медицина</div>
<div class="c" style="left:1091px;top:343px;width:59px">Ещё</div>
<div class="c" style="left:1153px;top:343px;width:90px">Пластическая хирургия</div>
<div class="c" style="left:1246px;top:343px;width:239px">+<b>7</b> (<b>3852</b>) <b>535</b>-<b>535</b>, +<b>7</b> (<b>3852</b>) <b>500</b>-<b>814</b></div>
<div class="c" style="left:1488px;top:343px;width:118px">ТЦ Поместье</div>
<div class="c l" style="left:1609px;top:343px;width:129px">info@anturium.ru</div>
<div class="c l" style="left:1741px;top:343px;width:124px">http://www.anturium.ru</div>
<div class="c l" style="left:1868px;top:343px;width:22px">https://vk.com/club</div>
<div class="c" style="left:24px;top:355px;width:187px">River</div>
<div class="c" style="left:214px;top:355px;width:167px">медицинский центр</div>
<div class="c" style="left:384px;top:355px;width:36px">Россия</div>
<div class="c" style="left:423px;top:355px;width:115px">Алтайский край</div>
<div class="c" style="left:541px;top:355px;width:204px">Барнаул</div>
<div class="c" style="left:746px;top:355px;width:36px;text-align:right"><b>656056</b></div>
<div class="c" style="left:787px;top:355px;width:136px">площадь Баварина, <b>1</b></div>
<div class="c" style="left:926px;top:355px;width:105px"><b>1</b>-<b>3</b> этаж</div>
<div class="c" style="left:1034px;top:355px;width:54px">Медицина</div>
<div class="c" style="left:1091px;top:355px;width:59px">Ещё</div>
<div class="c" style="left:1153px;top:355px;width:90px">Пластическая хирургия</div>
<div class="c" style="left:1246px;top:355px;width:239px">+<b>7</b> (<b>3852</b>) <b>99</b>-<b>22</b>-<b>22</b>, +<b>7</b> (<b>3852</b>) <b>23</b>-<b>00</b>-<b>86</b></div>
<div class="c" style="left:1488px;top:355px;width:118px">Площадь Баварина</div>
<div class="c l" style="left:1609px;top:355px;width:129px">hello@riverplastic.ru</div>
<div class="c l" style="left:1741px;top:355px;width:124px">http://riverplastic.ru</div>
<div class="c l" style="left:1868px;top:355px;width:22px">https://vk.com/club</div>
<div class="c" style="left:24px;top:367px;width:187px">Антуриум</div>
<div class="c" style="left:214px;top:367px;width:167px">клиника эстетической медицины</div>
<div class="c" style="left:384px;top:367px;width:36px">Россия</div>
<div class="c" style="left:423px;top:367px;width:115px">Алтайский край</div>
<div class="c" style="left:541px;top:367px;width:204px">Барнаул</div>
<div class="c" style="left:746px;top:367px;width:36px;text-align:right"><b>656043</b></div>
<div class="c" style="left:787px;top:367px;width:136px">улица Ползунова, <b>52</b>а</div>
<div class="c" style="left:926px;top:367px;width:105px"><b>1</b> этаж</div>
<div class="c" style="left:1034px;top:367px;width:54px">Медицина</div>
<div class="c" style="left:1091px;top:367px;width:59px">Ещё</div>
<div class="c" style="left:1153px;top:367px;width:90px">Пластическая хирургия</div>
<div class="c" style="left:1246px;top:367px;width:239px">+<b>7</b> (<b>3852</b>) <b>557</b>-<b>557</b>, +<b>7</b> (<b>3852</b>) <b>506</b>-<b>828</b></div>
<div class="c" style="left:1488px;top:367px;width:118px">Пушкина</div>
<div class="c l" style="left:1609px;top:367px;width:256px">info@cosmetologist.ru</div>
<div class="c l" style="left:1868px;top:367px;width:22px">https://vk.com/club</div>
<div class="c" style="left:24px;top:379px;width:187px">Клото</div>
<div class="c" style="left:214px;top:379px;width:167px">клиника эстетической медицины и косметологии</div>
<div class="c" style="left:384px;top:379px;width:36px">Россия</div>
<div class="c" style="left:423px;top:379px;width:115px">Алтайский край</div>
<div class="c" style="left:541px;top:379px;width:204px">Барнаул</div>
<div class="c" style="left:746px;top:379px;width:36px;text-align:right"><b>656058</b></div>
<div class="c" style="left:787px;top:379px;width:136px">Балтийская улица, <b>63</b>Б</div>
<div class="c" style="left:926px;top:379px;width:105px"><b>1</b> этаж</div>
<div class="c" style="left:1034px;top:379px;width:54px">Медицина</div>
<div class="c" style="left:1091px;top:379px;width:59px">Ещё</div>
<div class="c" style="left:1153px;top:379px;width:90px">Пластическая хирургия</div>
<div class="c" style="left:1246px;top:379px;width:239px">+<b>7</b> (<b>3852</b>) <b>99</b>-<b>69</b>-<b>97</b></div>
<div class="c" style="left:1488px;top:379px;width:118px">пл. Адмирала Кузнецова</div>
<div class="c l" style="left:1609px;top:379px;width:129px">kloto_cosmetology@mail.ru</div>
<div class="c l" style="left:1741px;top:379px;width:124px">http://klotoclinic.ru</div>
<div class="c l" style="left:1868px;top:379px;width:22px">https://vk.com/club</div>
<div class="c" style="left:24px;top:391px;width:187px">Персона-Мед</div>
<div class="c" style="left:214px;top:391px;width:167px">центр красоты и эстетической медицины</div>
<div class="c" style="left:384px;top:391px;width:36px">Россия</div>
<div class="c" style="left:423px;top:391px;width:115px">Алтайский край</div>
<div class="c" style="left:541px;top:391px;width:204px">Барнаул</div>
<div class="c" style="left:746px;top:391px;width:36px;text-align:right"><b>656006</b></div>
<div class="c" style="left:787px;top:391px;width:136px">Лазурная, <b>7</b></div>
<div class="c" style="left:926px;top:391px;width:105px"><b>2</b> этаж</div>
<div class="c" style="left:1034px;top:391px;width:54px">Медицина</div>
<div class="c" style="left:1091px;top:391px;width:59px">Ещё</div>
<div class="c" style="left:1153px;top:391px;width:90px">Пластическая хирургия</div>
<div class="c" style="left:1246px;top:391px;width:163px">+<b>7</b> (<b>3852</b>) <b>54</b>-<b>00</b>-<b>77</b>, +<b>7</b>(<b>960</b>)<b>949</b>-<b>26</b>-<b>50</b>, +<b>7</b>(<b>903</b>)<b>911</b>-<b>37</b>-<b>78</b></div>
<div class="c" style="left:1412px;top:391px;width:73px">+<b>7</b>(<b>960</b>)<b>949</b>-<b>26</b>-<b>50</b></div>
<div class="c" style="left:1488px;top:391px;width:118px">Лазурная</div>
<div class="c l" style="left:1609px;top:391px;width:129px">per.med@yandex.ru</div>
<div class="c l" style="left:1741px;top:391px;width:149px">http://persona-med-brn.ru</div>
<div class="c" style="left:24px;top:403px;width:357px">Кабинет пластического хирурга Хвостова А.С.</div>
<div class="c" style="left:384px;top:403px;width:36px">Россия</div>
<div class="c" style="left:423px;top:403px;width:115px">Алтайский край</div>
<div class="c" style="left:541px;top:403px;width:204px">Барнаул</div>
<div class="c" style="left:746px;top:403px;width:36px;text-align:right"><b>656006</b></div>
<div class="c" style="left:787px;top:403px;width:136px">Лазурная, <b>7</b></div>
<div class="c" style="left:926px;top:403px;width:105px"><b>2</b> этаж</div>
<div class="c" style="left:1034px;top:403px;width:54px">Медицина</div>
<div class="c" style="left:1091px;top:403px;width:59px">Ещё</div>
<div class="c" style="left:1153px;top:403px;width:90px">Пластическая хирургия</div>
<div class="c" style="left:1246px;top:403px;width:163px">+<b>7</b>(<b>903</b>)<b>911</b>-<b>37</b>-<b>78</b></div>
<div class="c" style="left:1412px;top:403px;width:73px">+<b>7</b>(<b>903</b>)<b>911</b>-<b>37</b>-<b>78</b></div>
<div class="c" style="left:1488px;top:403px;width:118px">Лазурная</div>
<div class="c l" style="left:1609px;top:403px;width:129px">ashvostov@mail.ru</div>
<div class="c l" style="left:1741px;top:403px;width:149px">http://ashvostov.ru</div>
<div class="c" style="left:24px;top:415px;width:357px">Центр современной медицины</div>
<div class="c" style="left:384px;top:415px;width:36px">Россия</div>
<div class="c" style="left:423px;top:415px;width:115px">Алтайский край</div>
<div class="c" style="left:541px;top:415px;width:204px">Белокуриха</div>
<div class="c" style="left:746px;top:415px;width:36px;text-align:right"><b>659900</b></div>
<div class="c" style="left:787px;top:415px;width:136px">Академика Мясникова улица, <b>10</b>а</div>
<div class="c" style="left:926px;top:415px;width:105px"><b>1</b>, <b>2</b>, <b>3</b> этаж</div>
<div class="c" style="left:1034px;top:415px;width:54px">Медицина</div>
<div class="c" style="left:1091px;top:415px;width:59px">Ещё</div>
<div class="c" style="left:1153px;top:415px;width:90px">Пластическая хирургия</div>
<div class="c" style="left:1246px;top:415px;width:163px">+<b>7</b> (<b>38577</b>) <b>2</b>-<b>00</b>-<b>15</b>, +<b>7</b>(<b>913</b>)<b>272</b>-<b>55</b>-<b>55</b></div>
<div class="c" style="left:1412px;top:415px;width:73px">+<b>7</b>(<b>913</b>)<b>272</b>-<b>55</b>-<b>55</b></div>
<div class="c" style="left:1488px;top:415px;width:377px">Мясникова</div>
<div class="c l" style="left:1868px;top:415px;width:22px">https://vk.com/club</div>
<div class="c" style="left:24px;top:427px;width:187px">Secret</div>
<div class="c" style="left:214px;top:427px;width:167px">салон эпиляции</div>
<div class="c" style="left:384px;top:427px;width:36px">Россия</div>
<div class="c" style="left:423px;top:427px;width:115px">Алтайский край</div>
<div class="c" style="left:541px;top:427px;width:204px">Рубцовск</div>
<div class="c" style="left:746px;top:427px;width:36px;text-align:right"><b>658213</b></div>
<div class="c" style="left:787px;top:427px;width:136px">улица Дзержинского, <b>14</b></div>
<div class="c" style="left:926px;top:427px;width:105px"><b>1</b> этаж</div>
<div class="c" style="left:1034px;top:427px;width:54px">Медицина</div>
<div class="c" style="left:1091px;top:427px;width:59px">Ещё</div>
<div class="c" style="left:1153px;top:427px;width:332px">Пластическая хирургия</div>
<div class="c" style="left:1488px;top:427px;width:402px">Поликлиника</div>
<div class="c" style="left:24px;top:439px;width:187px">Шелк</div>
<div class="c" style="left:214px;top:439px;width:167px">клиника красоты и здоровья</div>
<div class="c" style="left:384px;top:439px;width:36px">Россия</div>
<div class="c" style="left:423px;top:439px;width:115px">Амурская область</div>
<div class="c" style="left:541px;top:439px;width:204px">Благовещенск</div>
<div class="c" style="left:746px;top:439px;width:36px;text-align:right"><b>675000</b></div>
<div class="c" style="left:787px;top:439px;width:136px">Краснофлотская улица, <b>123</b></div>
<div class="c" style="left:926px;top:439px;width:105px"><b>1</b> этаж</div>
<div class="c" style="left:1034px;top:439px;width:54px">Медицина</div>
<div class="c" style="left:1091px;top:439px;width:59px">Ещё</div>
<div class="c" style="left:1153px;top:439px;width:90px">Пластическая хирургия</div>
<div class="c" style="left:1246px;top:439px;width:163px">+<b>7</b> (<b>4162</b>) <b>21</b>-<b>04</b>-<b>40</b>, +<b>7</b>(<b>924</b>)<b>841</b>-<b>04</b>-<b>40</b></div>
<div class="c" style="left:1412px;top:439px;width:73px">+<b>7</b>(<b>924</b>)<b>841</b>-<b>04</b>-<b>40</b></div>
<div class="c" style="left:1488px;top:439px;width:118px">Шимановского</div>
<div class="c l" style="left:1609px;top:439px;width:129px">pa.kutsenko@gmail.com</div>
<div class="c l" style="left:1741px;top:439px;width:124px">http://t.me/shelk_cosmetology</div>
<div class="c l" style="left:1868px;top:439px;width:22px">https://vk.com/club</div>
<div class="c" style="left:24px;top:451px;width:357px">Клиника Медлайн-Премьер</div>
<div class="c" style="left:384px;top:451px;width:36px">Россия</div>
<div class="c" style="left:423px;top:451px;width:115px">Амурская область</div>
<div class="c" style="left:541px;top:451px;width:204px">Благовещенск</div>
<div class="c" style="left:746px;top:451px;width:36px;text-align:right"><b>675000</b></div>
<div class="c" style="left:787px;top:451px;width:136px">улица Ленина, <b>130</b></div>
<div class="c" style="left:926px;top:451px;width:105px"><b>1</b>, <b>2</b> этаж</div>
<div class="c" style="left:1034px;top:451px;width:54px">Медицина</div>
<div class="c" style="left:1091px;top:451px;width:59px">Ещё</div>
<div class="c" style="left:1153px;top:451px;width:90px">Пластическая хирургия</div>
<div class="c" style="left:1246px;top:451px;width:239px">+<b>7</b> (<b>4162</b>) <b>59</b>-<b>77</b>-<b>77</b></div>
<div class="c" style="left:1488px;top:451px;width:118px">Богдана Хмельницкого</div>
<div class="c l" style="left:1609px;top:451px;width:129px">medline.inbox@yandex.ru</div>
<div class="c l" style="left:1741px;top:451px;width:124px">http://medline.su</div>
<div class="c l" style="left:1868px;top:451px;width:22px">https://vk.com/club</div>
<div class="c" style="left:24px;top:463px;width:187px">Дива-clinic</div>
<div class="c" style="left:214px;top:463px;width:167px">центр косметологии и антивозрастной медицины</div>
<div class="c" style="left:384px;top:463px;width:36px">Россия</div>
<div class="c" style="left:423px;top:463px;width:115px">Амурская область</div>
<div class="c" style="left:541px;top:463px;width:204px">Благовещенск</div>
<div class="c" style="left:746px;top:463px;width:36px;text-align:right"><b>675000</b></div>
<div class="c" style="left:787px;top:463px;width:136px">Красноармейская улица, <b>123</b></div>
<div class="c" style="left:926px;top:463px;width:105px"><b>1</b> этаж</div>
<div class="c" style="left:1034px;top:463px;width:54px">Медицина</div>
<div class="c" style="left:1091px;top:463px;width:59px">Ещё</div>
<div class="c" style="left:1153px;top:463px;width:90px">Пластическая хирургия</div>
<div class="c" style="left:1246px;top:463px;width:239px">+<b>7</b> (<b>4162</b>) <b>531</b>-<b>777</b></div>
<div class="c" style="left:1488px;top:463px;width:118px">Автовокзал</div>
<div class="c l" style="left:1609px;top:463px;width:281px">divaooo@mail.ru</div>
<div class="c" style="left:24px;top:475px;width:187px">Эндоскопическая хирургия</div>
<div class="c" style="left:214px;top:475px;width:167px">центр</div>
<div class="c" style="left:384px;top:475px;width:36px">Россия</div>
<div class="c" style="left:423px;top:475px;width:115px">Амурская область</div>
<div class="c" style="left:541px;top:475px;width:204px">Благовещенск</div>
<div class="c" style="left:746px;top:475px;width:36px;text-align:right"><b>675000</b></div>
<div class="c" style="left:787px;top:475px;width:244px"><b>50</b> лет Октября улица, <b>24</b>/<b>2</b></div>
<div class="c" style="left:1034px;top:475px;width:54px">Медицина</div>
<div class="c" style="left:1091px;top:475px;width:59px">Ещё</div>
<div class="c" style="left:1153px;top:475px;width:90px">Пластическая хирургия</div>
<div class="c" style="left:1246px;top:475px;width:163px">+<b>7</b> (<b>4162</b>) <b>46</b>-<b>46</b>-<b>03</b>, +<b>7</b>(<b>968</b>)<b>246</b>-<b>46</b>-<b>03</b></div>
<div class="c" style="left:1412px;top:475px;width:73px">+<b>7</b>(<b>968</b>)<b>246</b>-<b>46</b>-<b>03</b></div>
<div class="c" style="left:1488px;top:475px;width:118px">Магазин Благовещенск</div>
<div class="c l" style="left:1609px;top:475px;width:129px">blag-endo@endoscopia<b>28</b>.ru</div>
<div class="c l" style="left:1741px;top:475px;width:149px">http://endoscopia<b>28</b>.ru</div>
<div class="c" style="left:24px;top:487px;width:187px">Благовещенская городская клиническая больница</div>
<div class="c" style="left:214px;top:487px;width:167px">отделение платных услуг</div>
<div class="c" style="left:384px;top:487px;width:36px">Россия</div>
<div class="c" style="left:423px;top:487px;width:115px">Амурская область</div>
<div class="c" style="left:541px;top:487px;width:204px">Благовещенск</div>
<div class="c" style="left:746px;top:487px;width:36px;text-align:right"><b>675000</b></div>
<div class="c" style="left:787px;top:487px;width:244px">Больничная улица, <b>32</b></div>
<div class="c" style="left:1034px;top:487px;width:54px">Медицина</div>
<div class="c" style="left:1091px;top:487px;width:59px">Ещё</div>
<div class="c" style="left:1153px;top:487px;width:332px">Пластическая хирургия</div>
<div class="c" style="left:1488px;top:487px;width:118px">Первая городская больница</div>
<div class="c l" style="left:1609px;top:487px;width:256px">bgkb@amurzdrav.ru</div>
<div class="c l" style="left:1868px;top:487px;width:22px">https://vk.com/club</div>
<div class="c" style="left:24px;top:499px;width:187px">Северный медицинский клинический центр им. Н.А. Семашко</div>
<div class="c" style="left:214px;top:499px;width:167px">отделение платных услуг</div>
<div class="c" style="left:384px;top:499px;width:36px">Россия</div>
<div class="c" style="left:423px;top:499px;width:115px">Архангельская область</div>
<div class="c" style="left:541px;top:499px;width:204px">Архангельск</div>
<div class="c" style="left:746px;top:499px;width:36px;text-align:right"><b>163001</b></div>
<div class="c" style="left:787px;top:499px;width:244px">Гайдара, <b>1</b></div>
<div class="c" style="left:1034px;top:499px;width:54px">Медицина</div>
<div class="c" style="left:1091px;top:499px;width:59px">Ещё</div>
<div class="c" style="left:1153px;top:499px;width:90px">Пластическая хирургия</div>
<div class="c" style="left:1246px;top:499px;width:239px">+<b>7</b> (<b>8182</b>) <b>65</b>-<b>38</b>-<b>41</b>, +<b>7</b> (<b>8182</b>) <b>41</b>-<b>11</b>-<b>11</b></div>
<div class="c" style="left:1488px;top:499px;width:118px">Гайдара</div>
<div class="c l" style="left:1609px;top:499px;width:129px">secretary@nmcs.ru</div>
<div class="c l" style="left:1741px;top:499px;width:124px">http://nmcs.ru</div>
<div class="c l" style="left:1868px;top:499px;width:22px">https://vk.com/club</div>
<div class="c" style="left:24px;top:511px;width:187px">Консультативная поликлиника</div>
<div class="c" style="left:214px;top:511px;width:167px">отделение платных услуг</div>
<div class="c" style="left:384px;top:511px;width:36px">Россия</div>
<div class="c" style="left:423px;top:511px;width:115px">Архангельская область</div>
<div class="c" style="left:541px;top:511px;width:204px">Архангельск</div>
<div class="c" style="left:746px;top:511px;width:36px;text-align:right"><b>163045</b></div>
<div class="c" style="left:787px;top:511px;width:136px">проспект Ломоносова, <b>292</b></div>
<div class="c" style="left:926px;top:511px;width:105px"><b>2</b> этаж</div>
<div class="c" style="left:1034px;top:511px;width:54px">Медицина</div>
<div class="c" style="left:1091px;top:511px;width:59px">Ещё</div>
<div class="c" style="left:1153px;top:511px;width:90px">Пластическая хирургия</div>
<div class="c" style="left:1246px;top:511px;width:163px">+<b>7</b> (<b>8182</b>) <b>63</b>-<b>63</b>-<b>69</b>, +<b>7</b>(<b>950</b>)<b>661</b>-<b>41</b>-<b>03</b>, +<b>7</b> (<b>8182</b>) <b>63</b>-<b>63</b>-<b>70</b></div>
<div class="c" style="left:1412px;top:511px;width:73px">+<b>7</b>(<b>950</b>)<b>661</b>-<b>41</b>-<b>03</b></div>
<div class="c" style="left:1488px;top:511px;width:250px">Областная больница</div>
<div class="c l" style="left:1741px;top:511px;width:149px">http://aokb.ru</div>
<div class="c" style="left:24px;top:523px;width:187px">Пульс</div>
<div class="c" style="left:214px;top:523px;width:167px">многопрофильная клиника</div>
<div class="c" style="left:384px;top:523px;width:36px">Россия</div>
<div class="c" style="left:423px;top:523px;width:115px">Архангельская область</div>
<div class="c" style="left:541px;top:523px;width:204px">Архангельск</div>
<div class="c" style="left:746px;top:523px;width:36px;text-align:right"><b>163000</b></div>
<div class="c" style="left:787px;top:523px;width:136px">набережная Северной Двины, <b>87</b></div>
<div class="c" style="left:926px;top:523px;width:105px"><b>1</b> этаж</div>
<div class="c" style="left:1034px;top:523px;width:54px">Медицина</div>
<div class="c" style="left:1091px;top:523px;width:59px">Ещё</div>
<div class="c" style="left:1153px;top:523px;width:90px">Пластическая хирургия</div>
<div class="c" style="left:1246px;top:523px;width:239px"><b>8</b>(<b>800</b>)<b>550</b>-<b>47</b>-<b>08</b>, +<b>7</b> (<b>8182</b>) <b>49</b>-<b>07</b>-<b>08</b></div>
<div class="c" style="left:1488px;top:523px;width:118px">Петровский парк</div>
<div class="c l" style="left:1609px;top:523px;width:129px">info@pulse.clinic</div>
<div class="c l" style="left:1741px;top:523px;width:124px">http://pulse.clinic</div>
<div class="c l" style="left:1868px;top:523px;width:22px">https://vk.com/club</div>
<div class="c" style="left:24px;top:535px;width:187px">Пульс</div>
<div class="c" style="left:214px;top:535px;width:167px">многопрофильная клиника</div>
<div class="c" style="left:384px;top:535px;width:36px">Россия</div>
<div class="c" style="left:423px;top:535px;width:115px">Архангельская область</div>
<div class="c" style="left:541px;top:535px;width:124px">Архангельск</div>
<div class="c" style="left:668px;top:535px;width:77px">Соломбала м-н</div>
<div class="c" style="left:746px;top:535px;width:36px;text-align:right"><b>163020</b></div>
<div class="c" style="left:787px;top:535px;width:136px">улица Советская, <b>5</b></div>
<div class="c" style="left:926px;top:535px;width:105px"><b>3</b> этаж, правое крыло</div>
<div class="c" style="left:1034px;top:535px;width:54px">Медицина</div>
<div class="c" style="left:1091px;top:535px;width:59px">Ещё</div>
<div class="c" style="left:1153px;top:535px;width:90px">Пластическая хирургия</div>
<div class="c" style="left:1246px;top:535px;width:239px"><b>8</b>(<b>800</b>)<b>550</b>-<b>47</b>-<b>08</b>, +<b>7</b> (<b>8182</b>) <b>49</b>-<b>07</b>-<b>08</b>, +<b>7</b> (<b>8182</b>) <b>48</b>-<b>07</b>-<b>08</b></div>
<div class="c" style="left:1488px;top:535px;width:118px">Таймырская</div>
<div class="c l" style="left:1609px;top:535px;width:129px">info@pulse.clinic</div>
<div class="c l" style="left:1741px;top:535px;width:124px">http://pulse.clinic</div>
<div class="c l" style="left:1868px;top:535px;width:22px">https://vk.com/club</div>
<div class="c" style="left:24px;top:547px;width:187px">Пульс</div>
<div class="c" style="left:214px;top:547px;width:167px">многопрофильная клиника</div>
<div class="c" style="left:384px;top:547px;width:36px">Россия</div>
<div class="c" style="left:423px;top:547px;width:115px">Архангельская область</div>
<div class="c" style="left:541px;top:547px;width:204px">Северодвинск</div>
<div class="c" style="left:746px;top:547px;width:36px;text-align:right"><b>164501</b></div>
<div class="c" style="left:787px;top:547px;width:136px">улица Ломоносова, <b>42</b>а</div>
<div class="c" style="left:926px;top:547px;width:105px"><b>104</b> офис, <b>1</b> этаж</div>
<div class="c" style="left:1034px;top:547px;width:54px">Медицина</div>
<div class="c" style="left:1091px;top:547px;width:59px">Ещё</div>
<div class="c" style="left:1153px;top:547px;width:90px">Пластическая хирургия</div>
<div class="c" style="left:1246px;top:547px;width:239px"><b>8</b>(<b>800</b>)<b>550</b>-<b>47</b>-<b>08</b>, +<b>7</b> (<b>8182</b>) <b>49</b>-<b>07</b>-<b>08</b></div>
<div class="c" style="left:1488px;top:547px;width:118px">пл. Ломоносова</div>
<div class="c l" style="left:1609px;top:547px;width:129px">info@pulse.clinic</div>
<div class="c l" style="left:1741px;top:547px;width:124px">http://pulse.clinic</div>
<div class="c l" style="left:1868px;top:547px;width:22px">https://vk.com/club</div>
<div class="c" style="left:24px;top:559px;width:357px">Медико-санитарная часть</div>
<div class="c" style="left:384px;top:559px;width:36px">Россия</div>
<div class="c" style="left:423px;top:559px;width:115px">Астраханская область</div>
<div class="c" style="left:541px;top:559px;width:204px">Астрахань</div>
<div class="c" style="left:746px;top:559px;width:36px;text-align:right"><b>414057</b></div>
<div class="c" style="left:787px;top:559px;width:244px">Кубанская улица, <b>5</b></div>
<div class="c" style="left:1034px;top:559px;width:54px">Медицина</div>
<div class="c" style="left:1091px;top:559px;width:59px">Ещё</div>
<div class="c" style="left:1153px;top:559px;width:90px">Пластическая хирургия</div>
<div class="c" style="left:1246px;top:559px;width:163px">+<b>7</b> (<b>8512</b>) <b>46</b>-<b>11</b>-<b>46</b>, +<b>7</b> (<b>8512</b>) <b>46</b>-<b>11</b>-<b>11</b>, +<b>7</b>(<b>917</b>)<b>090</b>-<b>11</b>-<b>37</b></div>
<div class="c" style="left:1412px;top:559px;width:73px">+<b>7</b>(<b>917</b>)<b>090</b>-<b>11</b>-<b>37</b></div>
<div class="c" style="left:1488px;top:559px;width:118px">Медико-санитарная часть</div>
<div class="c l" style="left:1609px;top:559px;width:129px">kanceliariya@chuzmsch.ru,nuzmail@mail.ru</div>
<div class="c l" style="left:1741px;top:559px;width:124px">http://t.me/msch_astrakhan</div>
<div class="c l" style="left:1868px;top:559px;width:22px">https://vk.com/club</div>
<div class="c" style="left:24px;top:571px;width:187px">НорМед</div>
<div class="c" style="left:214px;top:571px;width:167px">клиника профессора Синчихина</div>
<div class="c" style="left:384px;top:571px;width:36px">Россия</div>
<div class="c" style="left:423px;top:571px;width:115px">Астраханская область</div>
<div class="c" style="left:541px;top:571px;width:204px">Астрахань</div>
<div class="c" style="left:746px;top:571px;width:36px;text-align:right"><b>414040</b></div>
<div class="c" style="left:787px;top:571px;width:136px">Чугунова, <b>18</b></div>
<div class="c" style="left:926px;top:571px;width:105px"><b>002</b> помещение</div>
<div class="c" style="left:1034px;top:571px;width:54px">Медицина</div>
<div class="c" style="left:1091px;top:571px;width:59px">Ещё</div>
<div class="c" style="left:1153px;top:571px;width:90px">Пластическая хирургия</div>
<div class="c" style="left:1246px;top:571px;width:163px">+<b>7</b> (<b>8512</b>) <b>514</b>-<b>513</b>, +<b>7</b>(<b>961</b>)<b>054</b>-<b>46</b>-<b>00</b></div>
<div class="c" style="left:1412px;top:571px;width:73px">+<b>7</b>(<b>961</b>)<b>054</b>-<b>46</b>-<b>00</b></div>
<div class="c" style="left:1488px;top:571px;width:118px">Школа №<b>32</b></div>
<div class="c l" style="left:1609px;top:571px;width:129px">prof.sinchikhin@mail.ru</div>
<div class="c l" style="left:1741px;top:571px;width:149px">http://t.me/normed_clinic</div>
<div class="c" style="left:24px;top:583px;width:357px">Клиника доктора Булатовой</div>
<div class="c" style="left:384px;top:583px;width:36px">Россия</div>
<div class="c" style="left:423px;top:583px;width:115px">Астраханская область</div>
<div class="c" style="left:541px;top:583px;width:124px">Астрахань</div>
<div class="c" style="left:668px;top:583px;width:77px">СО Искра</div>
<div class="c" style="left:746px;top:583px;width:36px;text-align:right"><b>414018</b></div>
<div class="c" style="left:787px;top:583px;width:244px">Безжонова, <b>101</b>Б</div>
<div class="c" style="left:1034px;top:583px;width:54px">Медицина</div>
<div class="c" style="left:1091px;top:583px;width:59px">Ещё</div>
<div class="c" style="left:1153px;top:583px;width:90px">Пластическая хирургия</div>
<div class="c" style="left:1246px;top:583px;width:163px">+<b>7</b> (<b>8512</b>) <b>23</b>-<b>81</b>-<b>38</b>, +<b>7</b>(<b>999</b>)<b>646</b>-<b>06</b>-<b>46</b></div>
<div class="c" style="left:1412px;top:583px;width:73px">+<b>7</b>(<b>999</b>)<b>646</b>-<b>06</b>-<b>46</b></div>
<div class="c" style="left:1488px;top:583px;width:118px">Школа одаренных детей</div>
<div class="c l" style="left:1609px;top:583px;width:281px">doctor.bulatova.md@yandex.ru</div>
<div class="c" style="left:24px;top:595px;width:187px">Салютем</div>
<div class="c" style="left:214px;top:595px;width:167px">многопрофильный медицинский центр</div>
<div class="c" style="left:384px;top:595px;width:36px">Россия</div>
<div class="c" style="left:423px;top:595px;width:115px">Астраханская область</div>
<div class="c" style="left:541px;top:595px;width:204px">Астрахань</div>
<div class="c" style="left:746px;top:595px;width:36px;text-align:right"><b>414000</b></div>
<div class="c" style="left:787px;top:595px;width:136px">Эспланадная, <b>35</b></div>
<div class="c" style="left:926px;top:595px;width:105px"><b>1</b> этаж</div>
<div class="c" style="left:1034px;top:595px;width:54px">Медицина</div>
<div class="c" style="left:1091px;top:595px;width:59px">Ещё</div>
<div class="c" style="left:1153px;top:595px;width:90px">Пластическая хирургия</div>
<div class="c" style="left:1246px;top:595px;width:239px">+<b>7</b> (<b>8512</b>) <b>442</b>-<b>442</b>, +<b>7</b> (<b>8512</b>) <b>442</b>-<b>444</b></div>
<div class="c" style="left:1488px;top:595px;width:118px">Филармония</div>
<div class="c l" style="left:1609px;top:595px;width:129px">salutem<b>30</b>@gmail.com</div>
<div class="c l" style="left:1741px;top:595px;width:124px">http://salutem-clinic.ru</div>
<div class="c l" style="left:1868px;top:595px;width:22px">https://vk.com/club</div>
<div class="c" style="left:24px;top:607px;width:187px">Салютем</div>
<div class="c" style="left:214px;top:607px;width:167px">многопрофильный медицинский центр</div>
<div class="c" style="left:384px;top:607px;width:36px">Россия</div>
<div class="c" style="left:423px;top:607px;width:115px">Астраханская область</div>
<div class="c" style="left:541px;top:607px;width:204px">Астрахань</div>
<div class="c" style="left:746px;top:607px;width:36px;text-align:right"><b>414040</b></div>
<div class="c" style="left:787px;top:607px;width:244px">Московская, <b>12</b></div>
<div class="c" style="left:1034px;top:607px;width:54px">Медицина</div>
<div class="c" style="left:1091px;top:607px;width:59px">Ещё</div>
<div class="c" style="left:1153px;top:607px;width:90px">Пластическая хирургия</div>
<div class="c" style="left:1246px;top:607px;width:239px">+<b>7</b> (<b>8512</b>) <b>442</b>-<b>442</b>, +<b>7</b> (<b>8512</b>) <b>442</b>-<b>444</b></div>
<div class="c" style="left:1488px;top:607px;width:118px">Дом-музей купца Г.В. Тетюшинова</div>
<div class="c l" style="left:1609px;top:607px;width:129px">salutem<b>30</b>@gmail.com</div>
<div class="c l" style="left:1741px;top:607px;width:124px">http://salutem-clinic.ru</div>
<div class="c l" style="left:1868px;top:607px;width:22px">https://vk.com/club</div>
<div class="c" style="left:24px;top:619px;width:187px">Эс Клиник</div>
<div class="c" style="left:214px;top:619px;width:167px">медицинский центр</div>
<div class="c" style="left:384px;top:619px;width:36px">Россия</div>
<div class="c" style="left:423px;top:619px;width:115px">Астраханская область</div>
<div class="c" style="left:541px;top:619px;width:204px">Астрахань</div>
<div class="c" style="left:746px;top:619px;width:36px;text-align:right"><b>414004</b></div>
<div class="c" style="left:787px;top:619px;width:244px">площадь Карла Маркса, <b>46</b></div>
<div class="c" style="left:1034px;top:619px;width:54px">Медицина</div>
<div class="c" style="left:1091px;top:619px;width:59px">Ещё</div>
<div class="c" style="left:1153px;top:619px;width:90px">Пластическая хирургия</div>
<div class="c" style="left:1246px;top:619px;width:239px">+<b>7</b> (<b>8512</b>) <b>99</b>-<b>06</b>-<b>90</b></div>
<div class="c" style="left:1488px;top:619px;width:118px">ТЦ Айсберг</div>
<div class="c l" style="left:1609px;top:619px;width:129px">info@c-clinica.com</div>
<div class="c l" style="left:1741px;top:619px;width:124px">http://c-clinica.com</div>
<div class="c l" style="left:1868px;top:619px;width:22px">https://vk.com/club</div>
<div class="c" style="left:24px;top:631px;width:357px">Клиника Батырова</div>
<div class="c" style="left:384px;top:631px;width:36px">Россия</div>
<div class="c" style="left:423px;top:631px;width:115px">Астраханская область</div>
<div class="c" style="left:541px;top:631px;width:204px">Астрахань</div>
<div class="c" style="left:746px;top:631px;width:36px;text-align:right"><b>414024</b></div>
<div class="c" style="left:787px;top:631px;width:136px">улица Набережная Приволжского затона, <b>18</b></div>
<div class="c" style="left:926px;top:631px;width:105px">цокольный этаж</div>
<div class="c" style="left:1034px;top:631px;width:54px">Медицина</div>
<div class="c" style="left:1091px;top:631px;width:59px">Ещё</div>
<div class="c" style="left:1153px;top:631px;width:90px">Пластическая хирургия</div>
<div class="c" style="left:1246px;top:631px;width:239px">+<b>7</b> (<b>8512</b>) <b>51</b>-<b>81</b>-<b>51</b></div>
<div class="c" style="left:1488px;top:631px;width:118px">Школа №<b>59</b></div>
<div class="c l" style="left:1609px;top:631px;width:129px"><b>518151</b>@list.ru</div>
<div class="c l" style="left:1741px;top:631px;width:124px">http://<b>518151</b>.ru</div>
<div class="c l" style="left:1868px;top:631px;width:22px">https://vk.com/club</div>
<div class="c" style="left:24px;top:643px;width:187px">Новая клиника</div>
<div class="c" style="left:214px;top:643px;width:167px">медицинский центр</div>
<div class="c" style="left:384px;top:643px;width:36px">Россия</div>
<div class="c" style="left:423px;top:643px;width:115px">Астраханская область</div>
<div class="c" style="left:541px;top:643px;width:204px">Астрахань</div>
<div class="c" style="left:746px;top:643px;width:36px;text-align:right"><b>414000</b></div>
<div class="c" style="left:787px;top:643px;width:244px">улица Красная Набережная, <b>68</b>а</div>
<div class="c" style="left:1034px;top:643px;width:54px">Медицина</div>
<div class="c" style="left:1091px;top:643px;width:59px">Ещё</div>
<div class="c" style="left:1153px;top:643px;width:90px">Пластическая хирургия</div>
<div class="c" style="left:1246px;top:643px;width:239px"><b>8</b>(<b>800</b>)<b>550</b>-<b>64</b>-<b>34</b>, +<b>7</b> (<b>8512</b>) <b>62</b>-<b>14</b>-<b>94</b>, +<b>7</b> (<b>8512</b>) <b>62</b>-<b>14</b>-<b>34</b></div>
<div class="c" style="left:1488px;top:643px;width:118px">Дом-музей Б.М. Кустодиева</div>
<div class="c l" style="left:1609px;top:643px;width:129px">new-clinic@mail.ru</div>
<div class="c l" style="left:1741px;top:643px;width:124px">http://www.new-clinic.ru</div>
<div class="c l" style="left:1868px;top:643px;width:22px">https://vk.com/club</div>
<div class="c" style="left:24px;top:655px;width:357px">Центр косметологии доктора Снежаны</div>
<div class="c" style="left:384px;top:655px;width:36px">Россия</div>
<div class="c" style="left:423px;top:655px;width:115px">Астраханская область</div>
<div class="c" style="left:541px;top:655px;width:124px">Астрахань</div>
<div class="c" style="left:668px;top:655px;width:77px">Юго-Восток-<b>2</b> м-н</div>
<div class="c" style="left:746px;top:655px;width:36px;text-align:right"><b>414057</b></div>
<div class="c" style="left:787px;top:655px;width:136px">проезд Воробьёва, <b>3</b> к<b>1</b></div>
<div class="c" style="left:926px;top:655px;width:105px"><b>2</b> этаж</div>
<div class="c" style="left:1034px;top:655px;width:54px">Медицина</div>
<div class="c" style="left:1091px;top:655px;width:59px">Ещё</div>
<div class="c" style="left:1153px;top:655px;width:90px">Пластическая хирургия</div>
<div class="c" style="left:1246px;top:655px;width:163px">+<b>7</b>(<b>927</b>)<b>556</b>-<b>66</b>-<b>64</b></div>
<div class="c" style="left:1412px;top:655px;width:73px">+<b>7</b>(<b>927</b>)<b>556</b>-<b>66</b>-<b>64</b></div>
<div class="c" style="left:1488px;top:655px;width:250px">ЖК на Воробьева</div>
<div class="c l" style="left:1741px;top:655px;width:149px">http://dikidi.net/<b>1121575</b></div>
<div class="c" style="left:24px;top:667px;width:357px">Ecopro Vita</div>
<div class="c" style="left:384px;top:667px;width:36px">Россия</div>
<div class="c" style="left:423px;top:667px;width:115px">Астраханская область</div>
<div class="c" style="left:541px;top:667px;width:204px">Астрахань</div>
<div class="c" style="left:746px;top:667px;width:36px;text-align:right"><b>414040</b></div>
<div class="c" style="left:787px;top:667px;width:136px">Академика Королёва, <b>35</b></div>
<div class="c" style="left:926px;top:667px;width:105px"><b>1</b> этаж</div>
<div class="c" style="left:1034px;top:667px;width:54px">Медицина</div>
<div class="c" style="left:1091px;top:667px;width:59px">Ещё</div>
<div class="c" style="left:1153px;top:667px;width:332px">Пластическая хирургия</div>
<div class="c" style="left:1488px;top:667px;width:402px">Парк Аркадия</div>
<div class="c" style="left:24px;top:679px;width:357px">Рего</div>
<div class="c" style="left:384px;top:679px;width:36px">Россия</div>
<div class="c" style="left:423px;top:679px;width:115px">Белгородская область</div>
<div class="c" style="left:541px;top:679px;width:204px">Белгород</div>
<div class="c" style="left:746px;top:679px;width:36px;text-align:right"><b>308012</b></div>
<div class="c" style="left:787px;top:679px;width:136px">Харьковский переулок, <b>36</b>а</div>
<div class="c" style="left:926px;top:679px;width:105px"><b>319</b> кабинет, <b>3</b> этаж</div>
<div class="c" style="left:1034px;top:679px;width:54px">Медицина</div>
<div class="c" style="left:1091px;top:679px;width:59px">Ещё</div>
<div class="c" style="left:1153px;top:679px;width:90px">Пластическая хирургия</div>
<div class="c" style="left:1246px;top:679px;width:163px">+<b>7</b>(<b>910</b>)<b>227</b>-<b>66</b>-<b>29</b></div>
<div class="c" style="left:1412px;top:679px;width:73px">+<b>7</b>(<b>910</b>)<b>227</b>-<b>66</b>-<b>29</b></div>
<div class="c" style="left:1488px;top:679px;width:118px">Телевышка</div>
<div class="c l" style="left:1609px;top:679px;width:256px">perobelgorod@gmail.com</div>
<div class="c l" style="left:1868px;top:679px;width:22px">https://vk.com/club</div>
<div class="c" style="left:24px;top:691px;width:187px">Эпиона Медикус</div>
<div class="c" style="left:214px;top:691px;width:167px">клиника пластической хирургии и косметологии</div>
<div class="c" style="left:384px;top:691px;width:36px">Россия</div>
<div class="c" style="left:423px;top:691px;width:115px">Белгородская область</div>
<div class="c" style="left:541px;top:691px;width:124px">Старый Оскол</div>
<div class="c" style="left:668px;top:691px;width:77px">Королёва м-н</div>
<div class="c" style="left:746px;top:691px;width:36px;text-align:right"><b>309502</b></div>
<div class="c" style="left:787px;top:691px;width:244px">микрорайон Королёва, <b>12</b>в</div>
<div class="c" style="left:1034px;top:691px;width:54px">Медицина</div>
<div class="c" style="left:1091px;top:691px;width:59px">Ещё</div>
<div class="c" style="left:1153px;top:691px;width:90px">Пластическая хирургия</div>
<div class="c" style="left:1246px;top:691px;width:239px"><b>8</b>(<b>800</b>)<b>550</b>-<b>39</b>-<b>35</b>, +<b>7</b> (<b>4725</b>) <b>39</b>-<b>05</b>-<b>35</b></div>
<div class="c" style="left:1488px;top:691px;width:118px">Микрорайон Дубрава-<b>1</b></div>
<div class="c l" style="left:1609px;top:691px;width:129px">mail@epiona-medicus.ru,epiona.medicus@mail.ru</div>
<div class="c l" style="left:1741px;top:691px;width:124px">http://epiona-medicus.ru</div>
<div class="c l" style="left:1868px;top:691px;width:22px">https://vk.com/club</div>
<div class="c" style="left:24px;top:703px;width:187px">Здоровье</div>
<div class="c" style="left:214px;top:703px;width:167px">многопрофильный медицинский центр</div>
<div class="c" style="left:384px;top:703px;width:36px">Россия</div>
<div class="c" style="left:423px;top:703px;width:115px">Брянская область</div>
<div class="c" style="left:541px;top:703px;width:204px">Брянск</div>
<div class="c" style="left:746px;top:703px;width:36px;text-align:right"><b>241028</b></div>
<div class="c" style="left:787px;top:703px;width:136px">проспект Станке Димитрова, <b>76</b></div>
<div class="c" style="left:926px;top:703px;width:105px"><b>1</b> этаж</div>
<div class="c" style="left:1034px;top:703px;width:54px">Медицина</div>
<div class="c" style="left:1091px;top:703px;width:59px">Ещё</div>
<div class="c" style="left:1153px;top:703px;width:90px">Пластическая хирургия</div>
<div class="c" style="left:1246px;top:703px;width:163px">+<b>7</b> (<b>4832</b>) <b>32</b>-<b>22</b>-<b>20</b>, +<b>7</b>(<b>910</b>)<b>332</b>-<b>22</b>-<b>20</b></div>
<div class="c" style="left:1412px;top:703px;width:73px">+<b>7</b>(<b>910</b>)<b>332</b>-<b>22</b>-<b>20</b></div>
<div class="c" style="left:1488px;top:703px;width:118px">Химчистка</div>
<div class="c l" style="left:1609px;top:703px;width:129px">common@medcentr-zdorovie.ru</div>
<div class="c l" style="left:1741px;top:703px;width:124px">http://jivo.chat/HeRRZFef<b>8</b>F</div>
<div class="c l" style="left:1868px;top:703px;width:22px">https://vk.com/club</div>
<div class="c" style="left:24px;top:715px;width:187px">Семейный доктор</div>
<div class="c" style="left:214px;top:715px;width:167px">Семейная клиника</div>
<div class="c" style="left:384px;top:715px;width:36px">Россия</div>
<div class="c" style="left:423px;top:715px;width:115px">Брянская область</div>
<div class="c" style="left:541px;top:715px;width:204px">Брянск</div>
<div class="c" style="left:746px;top:715px;width:36px;text-align:right"><b>241015</b></div>
<div class="c" style="left:787px;top:715px;width:136px">улица Ульянова, <b>4</b></div>
<div class="c" style="left:926px;top:715px;width:105px"><b>1</b> этаж, правое крыло</div>
<div class="c" style="left:1034px;top:715px;width:54px">Медицина</div>
<div class="c" style="left:1091px;top:715px;width:59px">Ещё</div>
<div class="c" style="left:1153px;top:715px;width:90px">Пластическая хирургия</div>
<div class="c" style="left:1246px;top:715px;width:239px">+<b>7</b> (<b>4832</b>) <b>599</b>-<b>359</b>, +<b>7</b> (<b>4832</b>) <b>40</b>-<b>67</b>-<b>06</b></div>
<div class="c" style="left:1488px;top:715px;width:118px">БМЗ</div>
<div class="c l" style="left:1609px;top:715px;width:129px">info@fdoctor<b>32</b>.ru</div>
<div class="c l" style="left:1741px;top:715px;width:124px">http://www.fdoctor<b>32</b>.ru</div>
<div class="c l" style="left:1868px;top:715px;width:22px">https://vk.com/club</div>
<div class="c" style="left:24px;top:727px;width:187px">Семейный доктор</div>
<div class="c" style="left:214px;top:727px;width:167px">лечебно-оздоровительный центр</div>
<div class="c" style="left:384px;top:727px;width:36px">Россия</div>
<div class="c" style="left:423px;top:727px;width:115px">Чеченская Республика</div>
<div class="c" style="left:541px;top:727px;width:204px">Грозный</div>
<div class="c" style="left:746px;top:727px;width:36px;text-align:right"><b>364014</b></div>
<div class="c" style="left:787px;top:727px;width:136px">Восточная улица, <b>4</b></div>
<div class="c" style="left:926px;top:727px;width:105px"><b>1</b>, <b>2</b> этаж</div>
<div class="c" style="left:1034px;top:727px;width:54px">Медицина</div>
<div class="c" style="left:1091px;top:727px;width:59px">Ещё</div>
<div class="c" style="left:1153px;top:727px;width:90px">Пластическая хирургия</div>
<div class="c" style="left:1246px;top:727px;width:163px">+<b>7</b>(<b>967</b>)<b>955</b>-<b>33</b>-<b>22</b>, <b>8</b>(<b>800</b>)<b>600</b>-<b>45</b>-<b>66</b></div>
<div class="c" style="left:1412px;top:727px;width:73px">+<b>7</b>(<b>967</b>)<b>955</b>-<b>33</b>-<b>22</b></div>
<div class="c" style="left:1488px;top:727px;width:402px">Маяковского</div>
<div class="c" style="left:24px;top:739px;width:187px">BEAUTY CLINIC</div>
<div class="c" style="left:214px;top:739px;width:167px">центр косметологии</div>
<div class="c" style="left:384px;top:739px;width:36px">Россия</div>
<div class="c" style="left:423px;top:739px;width:115px">Чеченская Республика</div>
<div class="c" style="left:541px;top:739px;width:204px">Грозный</div>
<div class="c" style="left:746px;top:739px;width:36px;text-align:right"><b>364024</b></div>
<div class="c" style="left:787px;top:739px;width:136px">улица Геннадия Трошева, <b>7</b></div>
<div class="c" style="left:926px;top:739px;width:105px"><b>2</b> этаж</div>
<div class="c" style="left:1034px;top:739px;width:54px">Медицина</div>
<div class="c" style="left:1091px;top:739px;width:59px">Ещё</div>
<div class="c" style="left:1153px;top:739px;width:90px">Пластическая хирургия</div>
<div class="c" style="left:1246px;top:739px;width:163px">+<b>7</b>(<b>988</b>)<b>292</b>-<b>17</b>-<b>16</b></div>
<div class="c" style="left:1412px;top:739px;width:73px">+<b>7</b>(<b>988</b>)<b>292</b>-<b>17</b>-<b>16</b></div>
<div class="c" style="left:1488px;top:739px;width:118px">Стадион им. Султана Билимханова</div>
<div class="c l" style="left:1609px;top:739px;width:129px">info@beautyclinic<b>05</b>.ru</div>
<div class="c l" style="left:1741px;top:739px;width:149px">http://beautyclinic<b>05</b>.ru</div>
<div class="c" style="left:24px;top:751px;width:187px">НовоМед</div>
<div class="c" style="left:214px;top:751px;width:167px">медицинский центр</div>
<div class="c" style="left:384px;top:751px;width:36px">Россия</div>
<div class="c" style="left:423px;top:751px;width:115px">Челябинская область</div>
<div class="c" style="left:541px;top:751px;width:124px">Магнитогорск</div>
<div class="c" style="left:668px;top:751px;width:77px"><b>132</b>-й м-н</div>
<div class="c" style="left:746px;top:751px;width:36px;text-align:right"><b>455049</b></div>
<div class="c" style="left:787px;top:751px;width:136px">улица Труда, <b>36</b></div>
<div class="c" style="left:926px;top:751px;width:105px"><b>1</b>, <b>4</b>-<b>5</b>, <b>7</b>-<b>8</b> этаж</div>
<div class="c" style="left:1034px;top:751px;width:54px">Медицина</div>
<div class="c" style="left:1091px;top:751px;width:59px">Ещё</div>
<div class="c" style="left:1153px;top:751px;width:90px">Пластическая хирургия</div>
<div class="c" style="left:1246px;top:751px;width:239px">+<b>7</b> (<b>3519</b>) <b>58</b>-<b>38</b>-<b>38</b></div>
<div class="c" style="left:1488px;top:751px;width:118px">Курортная поликлиника</div>
<div class="c l" style="left:1609px;top:751px;width:129px">marketing@novomed-mc.ru,reg@novomed-mc.ru</div>
<div class="c l" style="left:1741px;top:751px;width:124px">http://novomed-mc.ru</div>
<div class="c l" style="left:1868px;top:751px;width:22px">https://vk.com/club</div>
<div class="c" style="left:24px;top:763px;width:187px">Медэкс</div>
<div class="c" style="left:214px;top:763px;width:167px">медицинский центр</div>
<div class="c" style="left:384px;top:763px;width:36px">Россия</div>
<div class="c" style="left:423px;top:763px;width:115px">Челябинская область</div>
<div class="c" style="left:541px;top:763px;width:124px">Магнитогорск</div>
<div class="c" style="left:668px;top:763px;width:77px"><b>134</b>-й (Правобережный)</div>
<div class="c" style="left:746px;top:763px;width:36px;text-align:right"><b>455030</b></div>
<div class="c" style="left:787px;top:763px;width:136px">Советская улица, <b>88</b></div>
<div class="c" style="left:926px;top:763px;width:105px"><b>5</b> этаж</div>
<div class="c" style="left:1034px;top:763px;width:54px">Медицина</div>
<div class="c" style="left:1091px;top:763px;width:59px">Ещё</div>
<div class="c" style="left:1153px;top:763px;width:90px">Пластическая хирургия</div>
<div class="c" style="left:1246px;top:763px;width:163px">+<b>7</b>(<b>904</b>)<b>975</b>-<b>16</b>-<b>67</b></div>
<div class="c" style="left:1412px;top:763px;width:73px">+<b>7</b>(<b>904</b>)<b>975</b>-<b>16</b>-<b>67</b></div>
<div class="c" style="left:1488px;top:763px;width:118px">Советская</div>
<div class="c l" style="left:1609px;top:763px;width:281px">medex_subbotin@mail.ru</div>
<div class="c" style="left:24px;top:775px;width:187px">ММЦ</div>
<div class="c" style="left:214px;top:775px;width:167px">медицинский центр</div>
<div class="c" style="left:384px;top:775px;width:36px">Россия</div>
<div class="c" style="left:423px;top:775px;width:115px">Челябинская область</div>
<div class="c" style="left:541px;top:775px;width:124px">Миасс</div>
<div class="c" style="left:668px;top:775px;width:77px">Автозавод ж/м</div>
<div class="c" style="left:746px;top:775px;width:36px;text-align:right"><b>456300</b></div>
<div class="c" style="left:787px;top:775px;width:244px">Ильменская улица, <b>81</b>/<b>1</b></div>
<div class="c" style="left:1034px;top:775px;width:54px">Медицина</div>
<div class="c" style="left:1091px;top:775px;width:59px">Ещё</div>
<div class="c" style="left:1153px;top:775px;width:90px">Пластическая хирургия</div>
<div class="c" style="left:1246px;top:775px;width:239px">+<b>7</b> (<b>351</b>) <b>700</b>-<b>93</b>-<b>38</b>, +<b>7</b> (<b>3513</b>) <b>59</b>-<b>03</b>-<b>03</b>, +<b>7</b> (<b>3513</b>) <b>59</b>-<b>03</b>-<b>93</b>, +<b>7</b> (<b>3513</b>) <b>59</b>-<b>03</b>-<b>94</b></div>
<div class="c" style="left:1488px;top:775px;width:118px">ЦГБ</div>
<div class="c l" style="left:1609px;top:775px;width:129px">mmc.disk@yandex.ru</div>
<div class="c l" style="left:1741px;top:775px;width:124px">http://мцмиасский.рф</div>
<div class="c l" style="left:1868px;top:775px;width:22px">https://vk.com/club</div>
<div class="c" style="left:24px;top:787px;width:187px">Эф Эм Си</div>
<div class="c" style="left:214px;top:787px;width:167px">медицинский центр</div>
<div class="c" style="left:384px;top:787px;width:36px">Россия</div>
<div class="c" style="left:423px;top:787px;width:115px">Челябинская область</div>
<div class="c" style="left:541px;top:787px;width:124px">Миасс</div>
<div class="c" style="left:668px;top:787px;width:77px">Автозавод ж/м</div>
<div class="c" style="left:746px;top:787px;width:36px;text-align:right"><b>456300</b></div>
<div class="c" style="left:787px;top:787px;width:136px">Ильменская улица, <b>81</b></div>
<div class="c" style="left:926px;top:787px;width:105px"><b>7</b> этаж, Городская больница</div>
<div class="c" style="left:1034px;top:787px;width:54px">Медицина</div>
<div class="c" style="left:1091px;top:787px;width:59px">Ещё</div>
<div class="c" style="left:1153px;top:787px;width:90px">Пластическая хирургия</div>
<div class="c" style="left:1246px;top:787px;width:239px">+<b>7</b> (<b>351</b>) <b>211</b>-<b>30</b>-<b>20</b>, +<b>7</b> (<b>3513</b>) <b>28</b>-<b>98</b>-<b>48</b></div>
<div class="c" style="left:1488px;top:787px;width:118px">ЦГБ</div>
<div class="c l" style="left:1609px;top:787px;width:129px">mc@fmc<b>74</b>.ru</div>
<div class="c l" style="left:1741px;top:787px;width:124px">http://www.fmc<b>74</b>.ru</div>
<div class="c l" style="left:1868px;top:787px;width:22px">https://vk.com/club</div>
<div class="c" style="left:24px;top:799px;width:187px">Империя красоты</div>
<div class="c" style="left:214px;top:799px;width:167px">салон красоты</div>
<div class="c" style="left:384px;top:799px;width:36px">Россия</div>
<div class="c" style="left:423px;top:799px;width:115px">Челябинская область</div>
<div class="c" style="left:541px;top:799px;width:124px">Миасс</div>
<div class="c" style="left:668px;top:799px;width:77px">Автозавод ж/м</div>
<div class="c" style="left:746px;top:799px;width:36px;text-align:right"><b>456304</b></div>
<div class="c" style="left:787px;top:799px;width:136px">улица Ферсмана, <b>3</b></div>
<div class="c" style="left:926px;top:799px;width:105px"><b>1</b> этаж</div>
<div class="c" style="left:1034px;top:799px;width:54px">Медицина</div>
<div class="c" style="left:1091px;top:799px;width:59px">Ещё</div>
<div class="c" style="left:1153px;top:799px;width:90px">Пластическая хирургия</div>
<div class="c" style="left:1246px;top:799px;width:163px">+<b>7</b> (<b>3513</b>) <b>55</b>-<b>05</b>-<b>70</b>, +<b>7</b>(<b>951</b>)<b>446</b>-<b>60</b>-<b>07</b></div>
<div class="c" style="left:1412px;top:799px;width:73px">+<b>7</b>(<b>951</b>)<b>446</b>-<b>60</b>-<b>07</b></div>
<div class="c" style="left:1488px;top:799px;width:377px">Ферсмана</div>
<div class="c l" style="left:1868px;top:799px;width:22px">https://vk.com/club</div>
<div class="c" style="left:24px;top:811px;width:187px">Юкелф</div>
<div class="c" style="left:214px;top:811px;width:167px">клиника хирургии и эстетической медицины</div>
<div class="c" style="left:384px;top:811px;width:36px">Россия</div>
<div class="c" style="left:423px;top:811px;width:115px">Челябинская область</div>
<div class="c" style="left:541px;top:811px;width:243px">Белорецк</div>
<div class="c" style="left:787px;top:811px;width:244px">улица Точисского, <b>23</b>в</div>
<div class="c" style="left:1034px;top:811px;width:54px">Медицина</div>
<div class="c" style="left:1091px;top:811px;width:59px">Ещё</div>
<div class="c" style="left:1153px;top:811px;width:90px">Пластическая хирургия</div>
<div class="c" style="left:1246px;top:811px;width:239px">+<b>7</b> (<b>347</b>) <b>201</b>-<b>93</b>-<b>62</b></div>
<div class="c" style="left:1488px;top:811px;width:118px">Школа №<b>20</b></div>
<div class="c l" style="left:1609px;top:811px;width:129px">uhelfufa@mail.ru</div>
<div class="c l" style="left:1741px;top:811px;width:149px">http://uhelf.ru</div>
<div class="c" style="left:24px;top:823px;width:187px">Молдинг Маск</div>
<div class="c" style="left:214px;top:823px;width:167px">медицинский центр</div>
<div class="c" style="left:384px;top:823px;width:36px">Россия</div>
<div class="c" style="left:423px;top:823px;width:115px">Челябинская область</div>
<div class="c" style="left:541px;top:823px;width:204px">Челябинск</div>
<div class="c" style="left:746px;top:823px;width:36px;text-align:right"><b>454007</b></div>
<div class="c" style="left:787px;top:823px;width:136px"><b>40</b>-летия Октября, <b>15</b></div>
<div class="c" style="left:926px;top:823px;width:105px"><b>2</b> этаж</div>
<div class="c" style="left:1034px;top:823px;width:54px">Медицина</div>
<div class="c" style="left:1091px;top:823px;width:59px">Ещё</div>
<div class="c" style="left:1153px;top:823px;width:90px">Пластическая хирургия</div>
<div class="c" style="left:1246px;top:823px;width:163px"><b>8</b>(<b>800</b>)<b>222</b>-<b>03</b>-<b>55</b>, +<b>7</b>(<b>932</b>)<b>301</b>-<b>69</b>-<b>58</b></div>
<div class="c" style="left:1412px;top:823px;width:73px">+<b>7</b>(<b>932</b>)<b>301</b>-<b>69</b>-<b>58</b></div>
<div class="c" style="left:1488px;top:823px;width:118px"><b>1</b> Пятилетки</div>
<div class="c l" style="left:1609px;top:823px;width:129px">moldingmask@mail.ru</div>
<div class="c l" style="left:1741px;top:823px;width:124px">http://молдинг-маск.рф</div>
<div class="c l" style="left:1868px;top:823px;width:22px">https://vk.com/club</div>
<div class="c" style="left:24px;top:835px;width:187px">РЖД-Медицина</div>
<div class="c" style="left:214px;top:835px;width:167px">стационар</div>
<div class="c" style="left:384px;top:835px;width:36px">Россия</div>
<div class="c" style="left:423px;top:835px;width:115px">Челябинская область</div>
<div class="c" style="left:541px;top:835px;width:204px">Челябинск</div>
<div class="c" style="left:746px;top:835px;width:36px;text-align:right"><b>454048</b></div>
<div class="c" style="left:787px;top:835px;width:244px">улица Доватора, <b>23</b></div>
<div class="c" style="left:1034px;top:835px;width:54px">Медицина</div>
<div class="c" style="left:1091px;top:835px;width:59px">Ещё</div>
<div class="c" style="left:1153px;top:835px;width:90px">Пластическая хирургия</div>
<div class="c" style="left:1246px;top:835px;width:239px">+<b>7</b> (<b>351</b>) <b>268</b>-<b>71</b>-<b>97</b>, +<b>7</b> (<b>351</b>) <b>268</b>-<b>46</b>-<b>52</b>, +<b>7</b> (<b>351</b>) <b>268</b>-<b>25</b>-<b>49</b>, +<b>7</b> (<b>351</b>) <b>268</b>-<b>25</b>-<b>50</b></div>
<div class="c" style="left:1488px;top:835px;width:118px">Дорожная больница</div>
<div class="c l" style="left:1609px;top:835px;width:129px">dkbmarket@yandex.ru</div>
<div class="c l" style="left:1741px;top:835px;width:124px">http://chelyabinsk.rzd-medicine.ru</div>
<div class="c l" style="left:1868px;top:835px;width:22px">https://vk.com/club</div>
<div class="c" style="left:24px;top:847px;width:187px">МЕДЕОР</div>
<div class="c" style="left:214px;top:847px;width:167px">медицинский центр</div>
<div class="c" style="left:384px;top:847px;width:36px">Россия</div>
<div class="c" style="left:423px;top:847px;width:115px">Челябинская область</div>
<div class="c" style="left:541px;top:847px;width:204px">Челябинск</div>
<div class="c" style="left:746px;top:847px;width:36px;text-align:right"><b>454071</b></div>
<div class="c" style="left:787px;top:847px;width:244px">улица Горького, <b>16</b></div>
<div class="c" style="left:1034px;top:847px;width:54px">Медицина</div>
<div class="c" style="left:1091px;top:847px;width:59px">Ещё</div>
<div class="c" style="left:1153px;top:847px;width:90px">Пластическая хирургия</div>
<div class="c" style="left:1246px;top:847px;width:239px">+<b>7</b> (<b>351</b>) <b>214</b>-<b>57</b>-<b>62</b></div>
<div class="c" style="left:1488px;top:847px;width:118px">Башня</div>
<div class="c l" style="left:1609px;top:847px;width:129px">info@medeor<b>74</b>.ru</div>
<div class="c l" style="left:1741px;top:847px;width:124px">http://medeorcosmetology.clinic</div>
<div class="c l" style="left:1868px;top:847px;width:22px">https://vk.com/club</div>
<div class="c" style="left:24px;top:859px;width:187px">ДНК Клиника</div>
<div class="c" style="left:214px;top:859px;width:167px">сеть медицинских центров</div>
<div class="c" style="left:384px;top:859px;width:36px">Россия</div>
<div class="c" style="left:423px;top:859px;width:115px">Челябинская область</div>
<div class="c" style="left:541px;top:859px;width:204px">Челябинск</div>
<div class="c" style="left:746px;top:859px;width:36px;text-align:right"><b>454128</b></div>
<div class="c" style="left:787px;top:859px;width:244px"><b>40</b>-летия Победы, <b>28</b>в</div>
<div class="c" style="left:1034px;top:859px;width:54px">Медицина</div>
<div class="c" style="left:1091px;top:859px;width:59px">Ещё</div>
<div class="c" style="left:1153px;top:859px;width:90px">Пластическая хирургия</div>
<div class="c" style="left:1246px;top:859px;width:239px">+<b>7</b> (<b>351</b>) <b>216</b>-<b>12</b>-<b>44</b></div>
<div class="c" style="left:1488px;top:859px;width:118px"><b>250</b>-летия Челябинска</div>
<div class="c l" style="left:1609px;top:859px;width:129px">otzyv@medconsult.pro</div>
<div class="c l" style="left:1741px;top:859px;width:124px">http://jivo.chat/emGXTPkctT</div>
<div class="c l" style="left:1868px;top:859px;width:22px">https://vk.com/club</div>
<div class="c" style="left:24px;top:871px;width:187px">ВитаСмайл</div>
<div class="c" style="left:214px;top:871px;width:167px">центр медицины и стоматологии</div>
<div class="c" style="left:384px;top:871px;width:36px">Россия</div>
<div class="c" style="left:423px;top:871px;width:115px">Челябинская область</div>
<div class="c" style="left:541px;top:871px;width:204px">Челябинск</div>
<div class="c" style="left:746px;top:871px;width:36px;text-align:right"><b>454091</b></div>
<div class="c" style="left:787px;top:871px;width:244px">улица Труда, <b>85</b></div>
<div class="c" style="left:1034px;top:871px;width:54px">Медицина</div>
<div class="c" style="left:1091px;top:871px;width:59px">Ещё</div>
<div class="c" style="left:1153px;top:871px;width:90px">Пластическая хирургия</div>
<div class="c" style="left:1246px;top:871px;width:239px">+<b>7</b> (<b>351</b>) <b>729</b>-<b>96</b>-<b>29</b></div>
<div class="c" style="left:1488px;top:871px;width:118px">Пушкина</div>
<div class="c l" style="left:1609px;top:871px;width:129px">info@vitasmile.ru</div>
<div class="c l" style="left:1741px;top:871px;width:124px">http://vitasmile.ru</div>
<div class="c l" style="left:1868px;top:871px;width:22px">https://vk.com/club</div>
<div class="c" style="left:24px;top:883px;width:187px">ЛОТОС</div>
<div class="c" style="left:214px;top:883px;width:167px">сеть медицинских центров</div>
<div class="c" style="left:384px;top:883px;width:36px">Россия</div>
<div class="c" style="left:423px;top:883px;width:115px">Челябинская область</div>
<div class="c" style="left:541px;top:883px;width:204px">Челябинск</div>
<div class="c" style="left:746px;top:883px;width:36px;text-align:right"><b>454080</b></div>
<div class="c" style="left:787px;top:883px;width:244px">улица Труда, <b>187</b>Б</div>
<div class="c" style="left:1034px;top:883px;width:54px">Медицина</div>
<div class="c" style="left:1091px;top:883px;width:59px">Ещё</div>
<div class="c" style="left:1153px;top:883px;width:90px">Пластическая хирургия</div>
<div class="c" style="left:1246px;top:883px;width:239px">+<b>7</b> (<b>351</b>) <b>200</b>-<b>29</b>-<b>87</b></div>
<div class="c" style="left:1488px;top:883px;width:118px">Многофункциональный центр</div>
<div class="c l" style="left:1609px;top:883px;width:129px">call@lotos<b>74</b>.ru</div>
<div class="c l" style="left:1741px;top:883px;width:124px">http://www.lotos<b>74</b>.ru</div>
<div class="c l" style="left:1868px;top:883px;width:22px">https://vk.com/club</div>
<div class="c" style="left:24px;top:895px;width:187px">Частная врачебная практика</div>
<div class="c" style="left:214px;top:895px;width:167px">многопрофильный медицинский центр</div>
<div class="c" style="left:384px;top:895px;width:36px">Россия</div>
<div class="c" style="left:423px;top:895px;width:115px">Челябинская область</div>
<div class="c" style="left:541px;top:895px;width:204px">Челябинск</div>
<div class="c" style="left:746px;top:895px;width:36px;text-align:right"><b>454100</b></div>
<div class="c" style="left:787px;top:895px;width:136px">Комсомольский проспект, <b>90</b></div>
<div class="c" style="left:926px;top:895px;width:105px"><b>1</b> этаж</div>
<div class="c" style="left:1034px;top:895px;width:54px">Медицина</div>
<div class="c" style="left:1091px;top:895px;width:59px">Ещё</div>
<div class="c" style="left:1153px;top:895px;width:90px">Пластическая хирургия</div>
<div class="c" style="left:1246px;top:895px;width:239px">+<b>7</b> (<b>351</b>) <b>700</b>-<b>88</b>-<b>13</b></div>
<div class="c" style="left:1488px;top:895px;width:118px">Лыжная база</div>
<div class="c l" style="left:1609px;top:895px;width:129px">zdorov<b>72</b>@mail.ru,mail@<b>4</b>vp<b>74</b>.ru</div>
<div class="c l" style="left:1741px;top:895px;width:124px">http://jivo.chat/TNI<b>0</b>NaXU<b>2</b>q</div>
<div class="c l" style="left:1868px;top:895px;width:22px">https://vk.com/club</div>
<div class="c" style="left:24px;top:907px;width:187px">Арт-медика</div>
<div class="c" style="left:214px;top:907px;width:167px">медико-косметологический центр</div>
<div class="c" style="left:384px;top:907px;width:36px">Россия</div>
<div class="c" style="left:423px;top:907px;width:115px">Челябинская область</div>
<div class="c" style="left:541px;top:907px;width:204px">Челябинск</div>
<div class="c" style="left:746px;top:907px;width:36px;text-align:right"><b>454007</b></div>
<div class="c" style="left:787px;top:907px;width:136px">проспект Ленина, <b>12</b>а</div>
<div class="c" style="left:926px;top:907px;width:105px"><b>1</b> этаж</div>
<div class="c" style="left:1034px;top:907px;width:54px">Медицина</div>
<div class="c" style="left:1091px;top:907px;width:59px">Ещё</div>
<div class="c" style="left:1153px;top:907px;width:90px">Пластическая хирургия</div>
<div class="c" style="left:1246px;top:907px;width:239px">+<b>7</b> (<b>351</b>) <b>775</b>-<b>19</b>-<b>18</b>, +<b>7</b> (<b>351</b>) <b>775</b>-<b>19</b>-<b>88</b></div>
<div class="c" style="left:1488px;top:907px;width:118px">Театр ЧТЗ</div>
<div class="c l" style="left:1609px;top:907px;width:129px">marketing.art-medica@mail.ru</div>
<div class="c l" style="left:1741px;top:907px;width:124px">http://jivo.chat/cBMMm<b>8</b>Qe<b>8</b>u</div>
<div class="c l" style="left:1868px;top:907px;width:22px">https://vk.com/club</div>
<div class="c" style="left:24px;top:919px;width:187px">Лоравита</div>
<div class="c" style="left:214px;top:919px;width:167px">медицинский центр</div>
<div class="c" style="left:384px;top:919px;width:36px">Россия</div>
<div class="c" style="left:423px;top:919px;width:115px">Челябинская область</div>
<div class="c" style="left:541px;top:919px;width:204px">Челябинск</div>
<div class="c" style="left:746px;top:919px;width:36px;text-align:right"><b>454031</b></div>
<div class="c" style="left:787px;top:919px;width:136px">улица <b>50</b>-летия ВЛКСМ, <b>14</b>а</div>
<div class="c" style="left:926px;top:919px;width:105px"><b>1</b> этаж</div>
<div class="c" style="left:1034px;top:919px;width:54px">Медицина</div>
<div class="c" style="left:1091px;top:919px;width:59px">Ещё</div>
<div class="c" style="left:1153px;top:919px;width:90px">Пластическая хирургия</div>
<div class="c" style="left:1246px;top:919px;width:239px">+<b>7</b> (<b>351</b>) <b>750</b>-<b>75</b>-<b>99</b>, +<b>7</b> (<b>351</b>) <b>751</b>-<b>22</b>-<b>80</b>, <b>8</b>(<b>800</b>)<b>555</b>-<b>69</b>-<b>62</b></div>
<div class="c" style="left:1488px;top:919px;width:118px">Бассейн Строитель</div>
<div class="c l" style="left:1609px;top:919px;width:129px">loravit@yandex.ru,info@loravita.ru</div>
<div class="c l" style="left:1741px;top:919px;width:124px">http://www.loravita.ru</div>
<div class="c l" style="left:1868px;top:919px;width:22px">https://vk.com/club</div>
<div class="c" style="left:24px;top:931px;width:187px">Гименей</div>
<div class="c" style="left:214px;top:931px;width:167px">медицинский центр</div>
<div class="c" style="left:384px;top:931px;width:36px">Россия</div>
<div class="c" style="left:423px;top:931px;width:115px">Челябинская область</div>
<div class="c" style="left:541px;top:931px;width:204px">Челябинск</div>
<div class="c" style="left:746px;top:931px;width:36px;text-align:right"><b>454087</b></div>
<div class="c" style="left:787px;top:931px;width:136px">улица Блюхера, <b>53</b></div>
<div class="c" style="left:926px;top:931px;width:105px"><b>3</b> этаж</div>
<div class="c" style="left:1034px;top:931px;width:54px">Медицина</div>
<div class="c" style="left:1091px;top:931px;width:59px">Ещё</div>
<div class="c" style="left:1153px;top:931px;width:90px">Пластическая хирургия</div>
<div class="c" style="left:1246px;top:931px;width:239px">+<b>7</b> (<b>351</b>) <b>200</b>-<b>33</b>-<b>10</b></div>
<div class="c" style="left:1488px;top:931px;width:118px">Рылеева</div>
<div class="c l" style="left:1609px;top:931px;width:129px">gimenei<b>74</b>@mail.ru</div>
<div class="c l" style="left:1741px;top:931px;width:124px">http://gimenei<b>74</b>.ru</div>
<div class="c l" style="left:1868px;top:931px;width:22px">https://vk.com/club</div>
<div class="fb" style="left:200px;top:293px"></div>
<div class="dd" style="left:203.5px;top:298px;border-left-width:2.5px;border-right-width:2.5px;border-top-width:3px;border-top-color:#505050"></div>
<div class="fb" style="left:370px;top:293px"></div>
<div class="dd" style="left:373.5px;top:298px;border-left-width:2.5px;border-right-width:2.5px;border-top-width:3px;border-top-color:#505050"></div>
<div class="fb" style="left:409px;top:293px"></div>
<div class="dd" style="left:412.5px;top:298px;border-left-width:2.5px;border-right-width:2.5px;border-top-width:3px;border-top-color:#505050"></div>
<div class="fb" style="left:527px;top:293px"></div>
<div class="dd" style="left:530.5px;top:298px;border-left-width:2.5px;border-right-width:2.5px;border-top-width:3px;border-top-color:#505050"></div>
<div class="fb" style="left:654px;top:293px"></div>
<div class="dd" style="left:657.5px;top:298px;border-left-width:2.5px;border-right-width:2.5px;border-top-width:3px;border-top-color:#505050"></div>
<div class="fb" style="left:734px;top:293px"></div>
<div class="dd" style="left:737.5px;top:298px;border-left-width:2.5px;border-right-width:2.5px;border-top-width:3px;border-top-color:#505050"></div>
<div class="fb" style="left:773px;top:293px"></div>
<div class="dd" style="left:776.5px;top:298px;border-left-width:2.5px;border-right-width:2.5px;border-top-width:3px;border-top-color:#505050"></div>
<div class="fb" style="left:912px;top:293px"></div>
<div class="dd" style="left:915.5px;top:298px;border-left-width:2.5px;border-right-width:2.5px;border-top-width:3px;border-top-color:#505050"></div>
<div class="fb" style="left:1020px;top:293px"></div>
<div class="dd" style="left:1023.5px;top:298px;border-left-width:2.5px;border-right-width:2.5px;border-top-width:3px;border-top-color:#505050"></div>
<div class="fb" style="left:1077px;top:293px"></div>
<div class="dd" style="left:1080.5px;top:298px;border-left-width:2.5px;border-right-width:2.5px;border-top-width:3px;border-top-color:#505050"></div>
<div class="fb" style="left:1139px;top:293px"></div>
<div class="dd" style="left:1142.5px;top:298px;border-left-width:2.5px;border-right-width:2.5px;border-top-width:3px;border-top-color:#505050"></div>
<div class="fb" style="left:1232px;top:293px"></div>
<div class="dd" style="left:1235.5px;top:298px;border-left-width:2.5px;border-right-width:2.5px;border-top-width:3px;border-top-color:#505050"></div>
<div class="fb" style="left:1398px;top:293px"></div>
<div class="dd" style="left:1401.5px;top:298px;border-left-width:2.5px;border-right-width:2.5px;border-top-width:3px;border-top-color:#505050"></div>
<div class="fb" style="left:1474px;top:293px"></div>
<div class="dd" style="left:1477.5px;top:298px;border-left-width:2.5px;border-right-width:2.5px;border-top-width:3px;border-top-color:#505050"></div>
<div class="fb" style="left:1595px;top:293px"></div>
<div class="dd" style="left:1598.5px;top:298px;border-left-width:2.5px;border-right-width:2.5px;border-top-width:3px;border-top-color:#505050"></div>
<div class="fb" style="left:1727px;top:293px"></div>
<div class="dd" style="left:1730.5px;top:298px;border-left-width:2.5px;border-right-width:2.5px;border-top-width:3px;border-top-color:#505050"></div>
<div class="fb" style="left:1854px;top:293px"></div>
<div class="dd" style="left:1857.5px;top:298px;border-left-width:2.5px;border-right-width:2.5px;border-top-width:3px;border-top-color:#505050"></div>
<div class="a" style="left:20px;top:292px;width:193px;height:15px;border:2px solid #217346"></div>
<div class="a" style="left:207px;top:301px;width:7px;height:7px;background:#217346;border:1px solid #fff"></div>
<div class="a" style="left:1890px;top:282px;width:29px;height:660px;background:#e6e6e6"></div>
<div class="a" style="left:1892px;top:307px;width:25px;height:612px;background:#dadada"></div>
<div class="vl" style="left:1889px;top:293px;height:648px;background:#a0a0a0"></div>
<div class="sb" style="left:1892px;top:283px;width:25px;height:25px"></div>
<div class="sb" style="left:1892px;top:307px;width:25px;height:28px"></div>
<div class="a" style="left:0;top:941px;width:1919px;height:35px;background:#e6e6e6"></div>
<div class="a" style="left:0;top:974px;width:1919px;height:2px;background:#cfcfcf"></div>
<div class="hl" style="left:0;top:941px;width:1890px;background:#9a9a9a"></div>
<div class="a" style="left:118px;top:941px;width:362px;height:31px;background:#fff;border-left:1px solid #888;border-right:1px solid #888"></div>
<div class="a" style="left:118px;top:970px;width:362px;height:2px;background:#217346"></div>
<div class="a" style="left:1148px;top:951px;width:3px;height:2px;background:#aaa"></div><div class="a" style="left:1148px;top:957px;width:3px;height:2px;background:#aaa"></div><div class="a" style="left:1148px;top:963px;width:3px;height:2px;background:#aaa"></div>
<div class="a" style="left:1760px;top:946px;width:106px;height:24px;background:#dadada"></div>
<div class="sb" style="left:1168px;top:946px;width:26px;height:24px"></div>
<div class="sb" style="left:1193px;top:946px;width:567px;height:24px"></div>
<div class="sb" style="left:1866px;top:946px;width:25px;height:24px"></div>
<svg class="a" style="left:0;top:940px" width="1919" height="36"><path d="M1183 12v11l-6-5.5z" fill="#666"/><path d="M1876 12v11l6-5.5z" fill="#666"/><path d="M37 12v11l-5.5-5.5z" fill="#b4b4b4"/><path d="M66 12v11l5.5-5.5z" fill="#b4b4b4"/><circle cx="531" cy="18.75" r="9.6" fill="none" stroke="#666" stroke-width="1.3"/><path d="M526 18.75h10M531 13.75v10" stroke="#666" stroke-width="2"/></svg>
<div class="sb" style="left:1892px;top:918px;width:25px;height:25px"></div>
<svg class="a" style="left:1892px;top:283px" width="27" height="660"><path d="M7 15h11l-5.5-6z" fill="#666"/><path d="M7 645h11l-5.5 6z" fill="#666"/></svg>
<div class="t" style="left:687.38px;top:16.1px;font-size:18.9px;color:#ffffff;transform:scaleX(0.9164)">База клиник пластической хирургии по всей РФ, России.xlsx - Excel</div><div class="t" style="left:22.86px;top:58.1px;font-size:18.9px;color:#eef6f1;transform:scaleX(0.8943)">Файл</div><div class="t" style="left:106.6px;top:58.1px;font-size:18.9px;color:#2b6a48;transform:scaleX(0.9014)">Главная</div><div class="t" style="left:200.33px;top:58.1px;font-size:18.9px;color:#eef6f1;transform:scaleX(0.8681)">Вставка</div><div class="t" style="left:290.07px;top:58.1px;font-size:18.9px;color:#eef6f1;transform:scaleX(0.929)">Разметка страницы</div><div class="t" style="left:477.02px;top:58.1px;font-size:18.9px;color:#eef6f1;transform:scaleX(0.975)">Формулы</div><div class="t" style="left:586.0px;top:58.1px;font-size:18.9px;color:#eef6f1;transform:scaleX(0.9265)">Данные</div><div class="t" style="left:677.05px;top:58.1px;font-size:18.9px;color:#eef6f1;transform:scaleX(0.9514)">Рецензирование</div><div class="t" style="left:843.12px;top:58.1px;font-size:18.9px;color:#eef6f1;transform:scaleX(0.8788)">Вид</div><div class="t" style="left:928.09px;top:58.1px;font-size:18.9px;color:#d3e6da;transform:scaleX(0.9082)">Что вы хотите сделать?</div><div class="t" style="left:1684.5px;top:58.1px;font-size:18.9px;color:#eef6f1;transform:scaleX(0.9)">Вход</div><div class="t" style="left:1776.35px;top:58.1px;font-size:18.9px;color:#ffffff;transform:scaleX(0.9456)">Общий доступ</div><div class="t" style="left:8.22px;top:145.34px;font-size:18.5px;color:#444444;transform:scaleX(0.8844)">Вставить</div><div class="t" style="left:1137.54px;top:145.34px;font-size:18.5px;color:#444444;transform:scaleX(0.965)">Условное</div><div class="t" style="left:1098.84px;top:169.34px;font-size:18.5px;color:#444444;transform:scaleX(0.9639)">форматирование</div><div class="t" style="left:1258.32px;top:145.34px;font-size:18.5px;color:#444444;transform:scaleX(0.9752)">Форматировать</div><div class="t" style="left:1269.24px;top:169.34px;font-size:18.5px;color:#444444;transform:scaleX(0.96)">как таблицу</div><div class="t" style="left:1399.99px;top:145.34px;font-size:18.5px;color:#444444;transform:scaleX(0.9118)">Стили</div><div class="t" style="left:1395.0px;top:169.34px;font-size:18.5px;color:#444444;transform:scaleX(0.9479)">ячеек</div><div class="t" style="left:1642.62px;top:145.34px;font-size:18.5px;color:#444444;transform:scaleX(0.9812)">Сортировка</div><div class="t" style="left:1650.36px;top:169.34px;font-size:18.5px;color:#444444;transform:scaleX(0.9364)">и фильтр</div><div class="t" style="left:1760.65px;top:145.34px;font-size:18.5px;color:#444444;transform:scaleX(0.9515)">Найти и</div><div class="t" style="left:1747.86px;top:169.34px;font-size:18.5px;color:#444444;transform:scaleX(0.9407)">выделить</div><div class="t" style="left:139.54px;top:108.34px;font-size:18.5px;color:#444444;transform:scaleX(0.958)">Calibri</div><div class="t" style="left:275.36px;top:108.34px;font-size:18.5px;color:#444444;transform:scaleX(0.9389)">11</div><div class="t" style="left:602.18px;top:108.34px;font-size:18.5px;color:#444444;transform:scaleX(0.9213)">Перенести текст</div><div class="t" style="left:601.04px;top:152.04px;font-size:18.5px;color:#444444;transform:scaleX(0.9558)">Объединить и поместить в центре</div><div class="t" style="left:916.72px;top:108.84px;font-size:18.5px;color:#444444;transform:scaleX(0.9814)">Общий</div><div class="t" style="left:1495.52px;top:94.84px;font-size:18.5px;color:#444444;transform:scaleX(0.8818)">Вставить</div><div class="t" style="left:1495.09px;top:126.04px;font-size:18.5px;color:#444444;transform:scaleX(0.9058)">Удалить</div><div class="t" style="left:1495.03px;top:157.34px;font-size:18.5px;color:#444444;transform:scaleX(0.9692)">Формат</div><div class="t" style="left:2.8px;top:197.02px;font-size:15.1px;color:#666666;transform:scaleX(0.9951)">Буфер обмена</div><div class="t" style="left:227.5px;top:197.02px;font-size:15.1px;color:#666666;transform:scaleX(1.0041)">Шрифт</div><div class="t" style="left:588.68px;top:197.02px;font-size:15.1px;color:#666666;transform:scaleX(1.0225)">Выравнивание</div><div class="t" style="left:966.67px;top:197.02px;font-size:15.1px;color:#666666;transform:scaleX(1.031)">Число</div><div class="t" style="left:1254.0px;top:197.02px;font-size:15.1px;color:#666666;transform:scaleX(1.0)">Стили</div><div class="t" style="left:1499.47px;top:197.02px;font-size:15.1px;color:#666666;transform:scaleX(1.0347)">Ячейки</div><div class="t" style="left:1658.26px;top:197.02px;font-size:15.1px;color:#666666;transform:scaleX(1.0416)">Редактирование</div><div class="t" style="left:14.25px;top:241.41px;font-size:19.6px;color:#444444;transform:scaleX(1.0109)">A1</div><div class="t" style="left:388.21px;top:241.01px;font-size:19.6px;color:#444444;transform:scaleX(1.0459)">Название</div><div class="t" style="left:129.64px;top:947.42px;font-size:19.0px;color:#217346;font-weight:700;transform:scaleX(1.0607)">База клиник пластической хирург</div>
</body></html>
